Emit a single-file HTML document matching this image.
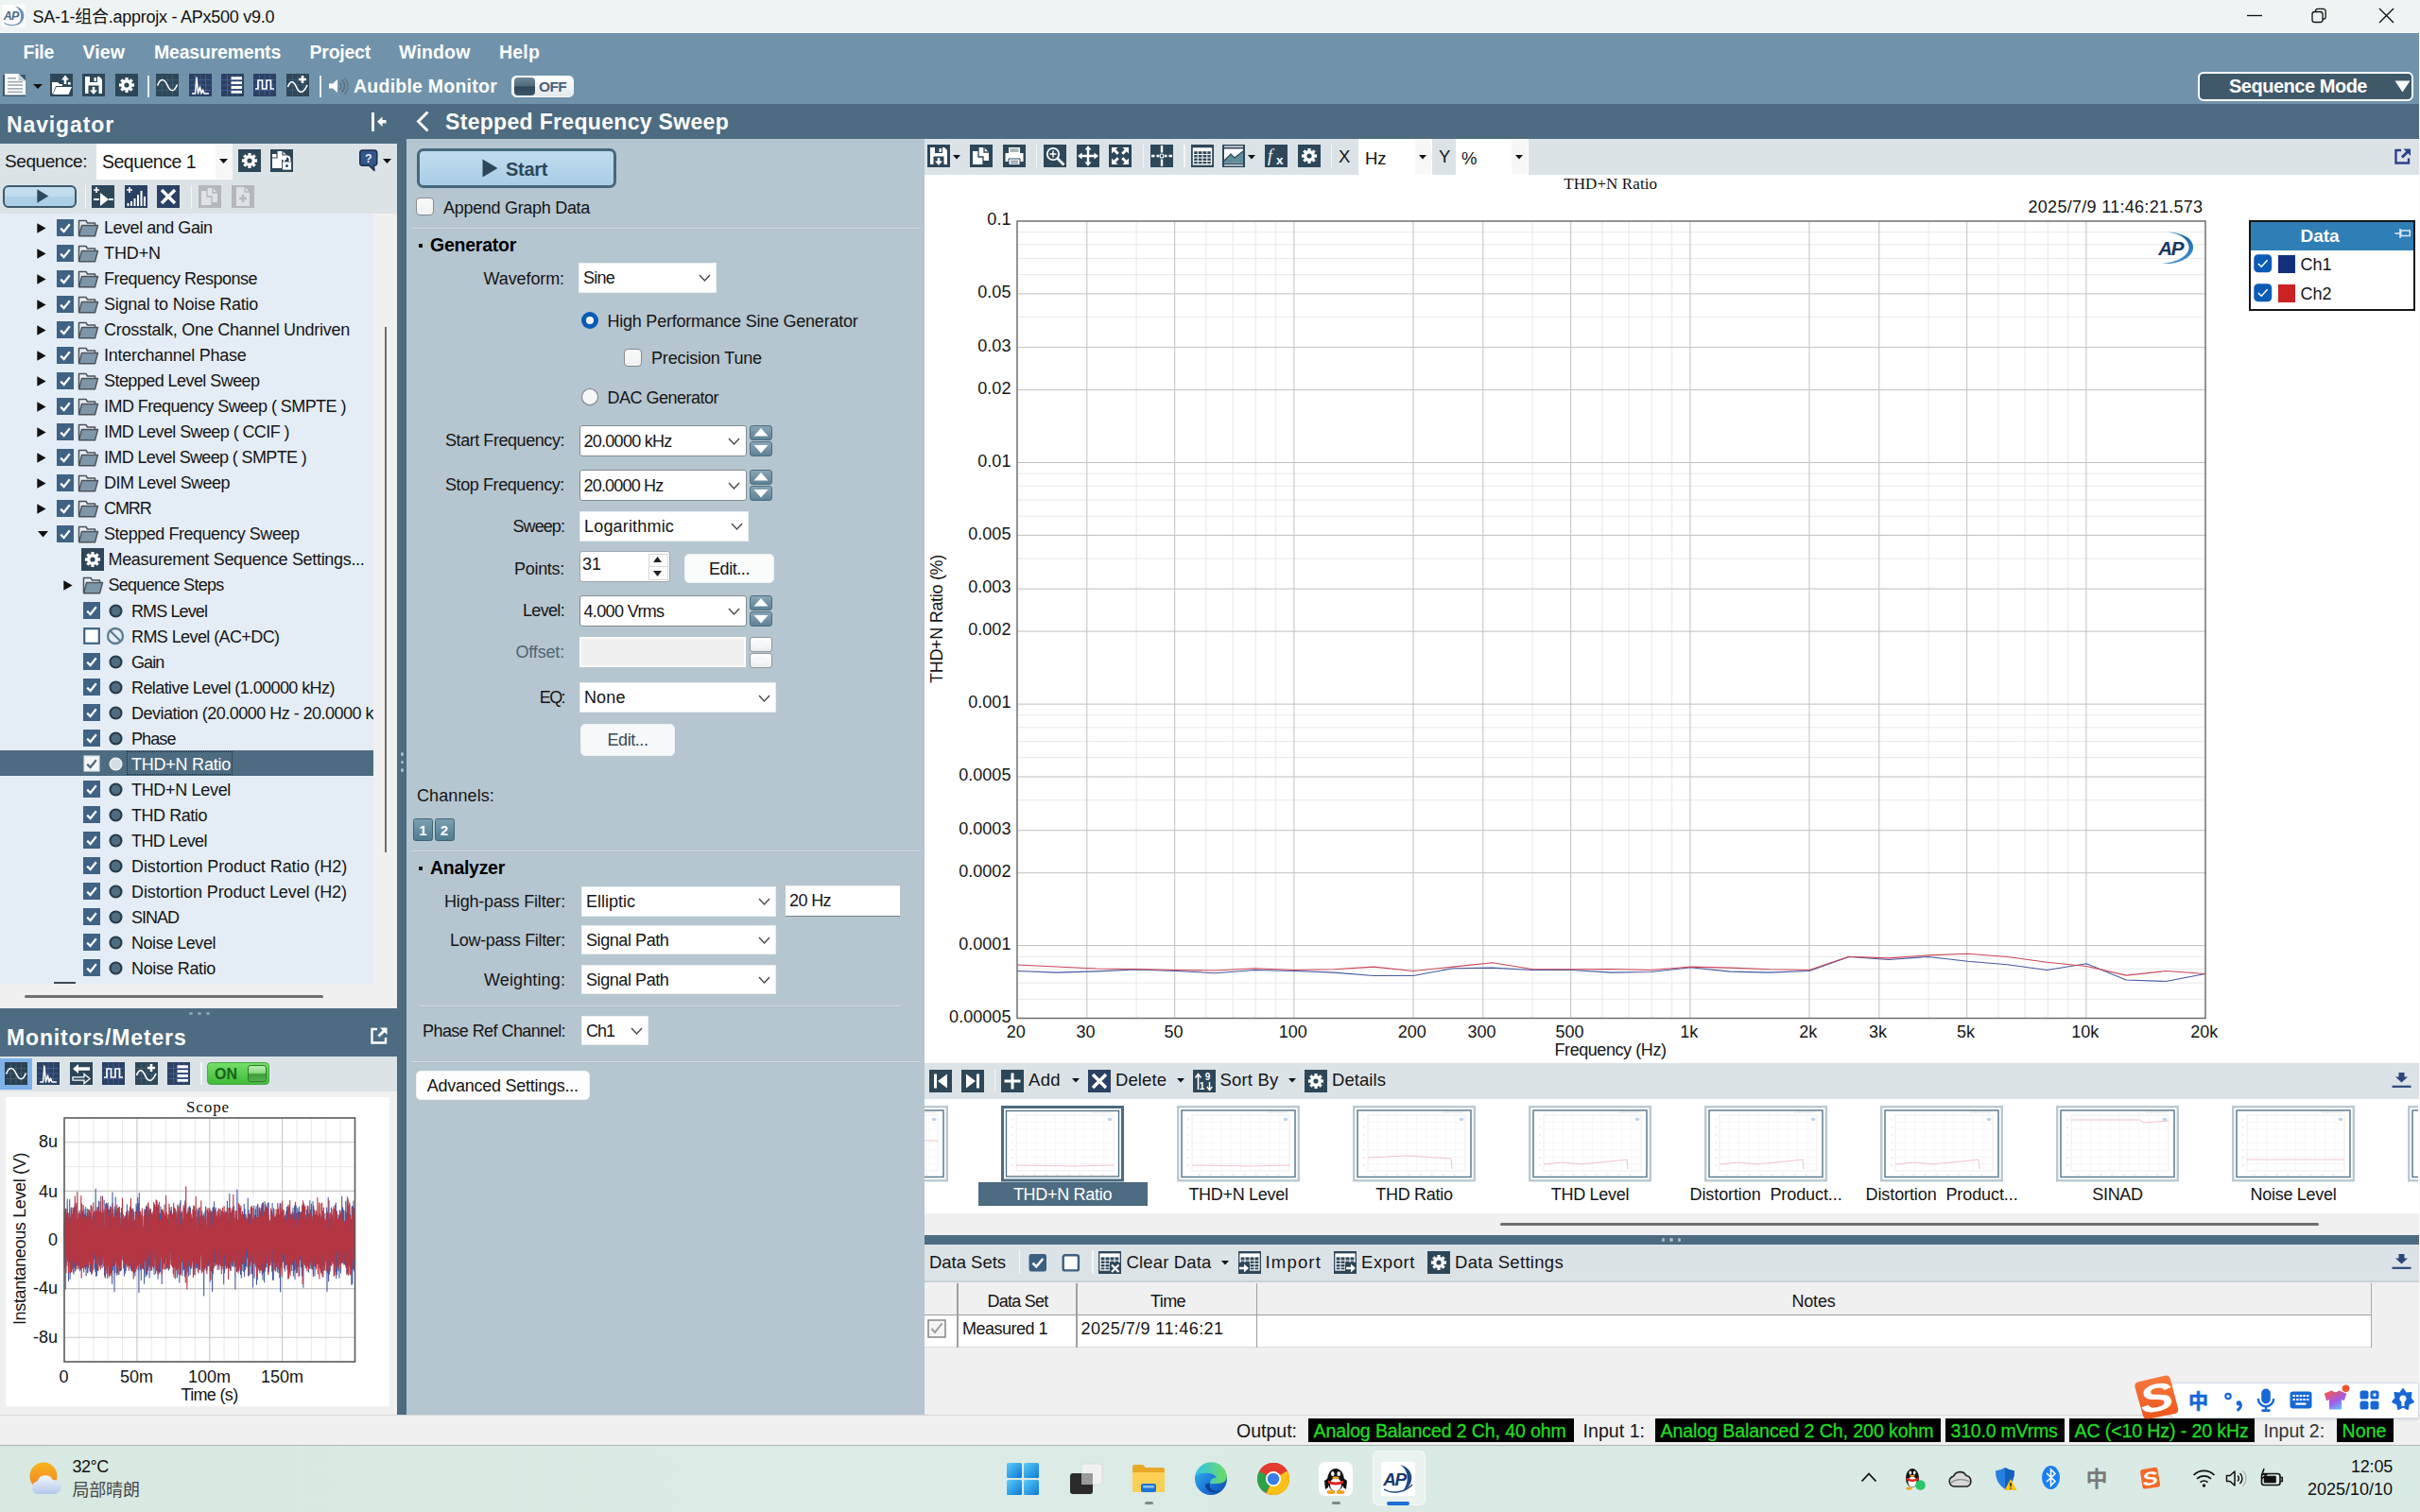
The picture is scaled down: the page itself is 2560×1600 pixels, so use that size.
<!DOCTYPE html>
<html lang="en"><head><meta charset="utf-8"><title>APx500</title>
<style>
html,body{margin:0;padding:0}
body{width:2560px;height:1600px;position:relative;overflow:hidden;background:#fff;font-family:"Liberation Sans","Noto Sans CJK SC",sans-serif;}
div,svg{position:absolute;box-sizing:border-box;}
svg{overflow:visible;display:block}
</style></head>
<body>
<div style="left:0px;top:0px;width:2560px;height:35px;background:#eef4f3;"></div>
<svg style="left:2px;top:5px;" width="24.5" height="23.5" viewBox="0 0 24.5 23.5"><rect x="0" y="0" width="24.5" height="23.5" rx="2" fill="#fdfefe"/><path d="M14 1.5C25 3.5 27.5 17 15.5 22.3C22 16.5 22 6.5 14 1.5Z" fill="#6d8fb0"/><path d="M2.5 19.5C8 23 16 22.5 21 17" stroke="#7d9cba" stroke-width="1.4" fill="none"/><text x="9.6" y="16.2" font-size="12.5" font-weight="bold" font-style="italic" fill="#48688a" text-anchor="middle" font-family="Liberation Sans, sans-serif" letter-spacing="-0.9">AP</text></svg>
<div style="top:6.8px;line-height:23px;height:23px;font-size:18px;color:#111;white-space:pre;left:34.5px;letter-spacing:-0.25px;">SA-1-组合.approjx - APx500 v9.0</div>
<svg style="left:2376px;top:8px;" width="18" height="18" viewBox="0 0 18 18"><path d="M1 8.5H17" stroke="#111" stroke-width="1.3"/></svg>
<svg style="left:2443px;top:6px;" width="20" height="20" viewBox="0 0 20 20"><rect x="3" y="6.5" width="11" height="11" rx="2.5" fill="none" stroke="#111" stroke-width="1.3"/><path d="M6.5 6.5V5.5A2.2 2.2 0 0 1 8.7 3.3H14.5A2.7 2.7 0 0 1 17.2 6V12A2.2 2.2 0 0 1 15 14.2H14" fill="none" stroke="#111" stroke-width="1.3"/></svg>
<svg style="left:2515px;top:7px;" width="19" height="19" viewBox="0 0 19 19"><path d="M2 2L17 17M17 2L2 17" stroke="#111" stroke-width="1.4"/></svg>
<div style="left:0px;top:35px;width:2560px;height:75px;background:#7093ab;"></div>
<div style="top:42.8px;line-height:25px;height:25px;font-size:19.5px;color:#fff;white-space:pre;font-weight:bold;letter-spacing:-0.27px;left:24.5px;">File</div>
<div style="top:42.8px;line-height:25px;height:25px;font-size:19.5px;color:#fff;white-space:pre;font-weight:bold;letter-spacing:0.10px;left:87.5px;">View</div>
<div style="top:42.8px;line-height:25px;height:25px;font-size:19.5px;color:#fff;white-space:pre;font-weight:bold;letter-spacing:-0.21px;left:163px;">Measurements</div>
<div style="top:42.8px;line-height:25px;height:25px;font-size:19.5px;color:#fff;white-space:pre;font-weight:bold;letter-spacing:-0.23px;left:327.5px;">Project</div>
<div style="top:42.8px;line-height:25px;height:25px;font-size:19.5px;color:#fff;white-space:pre;font-weight:bold;letter-spacing:0.16px;left:422px;">Window</div>
<div style="top:42.8px;line-height:25px;height:25px;font-size:19.5px;color:#fff;white-space:pre;font-weight:bold;letter-spacing:0.19px;left:528px;">Help</div>
<svg style="left:3px;top:78.4px;" width="24" height="24" viewBox="0 0 24 24"><rect x="0" y="1" width="24" height="23" fill="#3a566a"/><path d="M2 0H16.5L24 7.5V22.5H2Z" fill="#fff"/><path d="M16.5 0V7.5H24Z" fill="#c3ced6"/><path d="M5 4.8H14M5 8.6H21M5 12.2H21M5 15.8H21M5 19.4H21" stroke="#a5b0b8" stroke-width="1.7"/></svg>
<svg style="left:35px;top:89px;" width="10" height="5" viewBox="0 0 10 5"><path d="M0 0H10L5.0 5Z" fill="#111"/></svg>
<svg style="left:53px;top:78.4px;" width="24" height="24" viewBox="0 0 24 24"><rect width="24" height="24" fill="#2d4759"/><path d="M2 21V9H8L10 11H13V13H6L3 21Z" fill="#fff"/><path d="M6.5 14H23L19.5 22H3Z" fill="#fff"/><path d="M16 1.5L12 6.5H14.7V11H17.3V6.5H20Z" fill="#fff"/><rect x="19" y="9" width="2.6" height="2.6" fill="#fff"/></svg>
<svg style="left:87px;top:78.4px;" width="24" height="24" viewBox="0 0 24 24"><rect width="24" height="24" fill="#2d4759"/><path d="M3 3H18L21 6V21H3Z" fill="#fff"/><rect x="8" y="3" width="8" height="6" fill="#2d4759"/><rect x="12.5" y="4" width="2.4" height="4" fill="#fff"/><rect x="6.5" y="12.5" width="11" height="8.5" fill="#2d4759"/><path d="M12 22L8 17.5H10.7V14H13.3V17.5H16Z" fill="#fff"/></svg>
<svg style="left:122px;top:78.4px;" width="24" height="24" viewBox="0 0 24 24"><rect width="24" height="24" fill="#2d4759"/><path d="M20.03 10.34 L20.03 13.66 L17.83 13.42 L17.13 15.11 L18.85 16.50 L16.50 18.85 L15.11 17.13 L13.42 17.83 L13.66 20.03 L10.34 20.03 L10.58 17.83 L8.89 17.13 L7.50 18.85 L5.15 16.50 L6.87 15.11 L6.17 13.42 L3.97 13.66 L3.97 10.34 L6.17 10.58 L6.87 8.89 L5.15 7.50 L7.50 5.15 L8.89 6.87 L10.58 6.17 L10.34 3.97 L13.66 3.97 L13.42 6.17 L15.11 6.87 L16.50 5.15 L18.85 7.50 L17.13 8.89 L17.83 10.58Z M14.60 12.00 A2.6 2.6 0 1 0 9.40 12.00 A2.6 2.6 0 1 0 14.60 12.00Z" fill="#fff" fill-rule="evenodd"/></svg>
<div style="left:156px;top:80px;width:2px;height:23px;background:#e8eef2;"></div>
<svg style="left:165px;top:78.4px;" width="24" height="24" viewBox="0 0 24 24"><rect width="24" height="24" fill="#2d4759"/><path d="M6.5 1V23M1 6.5H23" stroke="#456073" stroke-width="0.8" fill="none"/><path d="M12 1V23M1 12H23" stroke="#456073" stroke-width="0.8" fill="none"/><path d="M17.5 1V23M1 17.5H23" stroke="#456073" stroke-width="0.8" fill="none"/><path d="M1.5 12.5C4.5 4.5 8.5 4.5 12 12S19 20 22.5 11.5" stroke="#fff" stroke-width="1.6" fill="none"/></svg>
<svg style="left:199.5px;top:78.4px;" width="24" height="24" viewBox="0 0 24 24"><rect width="24" height="24" fill="#2b4163"/><path d="M6.5 1V23M1 6.5H23" stroke="#4c61a3" stroke-width="0.8" fill="none"/><path d="M12 1V23M1 12H23" stroke="#4c61a3" stroke-width="0.8" fill="none"/><path d="M17.5 1V23M1 17.5H23" stroke="#4c61a3" stroke-width="0.8" fill="none"/><path d="M3 21H6.5L8 4L9.5 21L11.5 14L13 21L14.5 17L16 21H21" stroke="#fff" stroke-width="1.5" fill="none" stroke-linejoin="round"/></svg>
<svg style="left:234px;top:78.4px;" width="24" height="24" viewBox="0 0 24 24"><rect width="24" height="24" fill="#2b4163"/><path d="M6.5 1V23M1 6.5H23" stroke="#4c61a3" stroke-width="0.8" fill="none"/><path d="M12 1V23M1 12H23" stroke="#4c61a3" stroke-width="0.8" fill="none"/><path d="M17.5 1V23M1 17.5H23" stroke="#4c61a3" stroke-width="0.8" fill="none"/><path d="M10.5 4.7H22M10.5 9.6H22M10.5 14.5H22M10.5 19.4H22" stroke="#fff" stroke-width="2.9"/></svg>
<svg style="left:268px;top:78.4px;" width="24" height="24" viewBox="0 0 24 24"><rect width="24" height="24" fill="#2b4163"/><path d="M6.5 1V23M1 6.5H23" stroke="#4c61a3" stroke-width="0.8" fill="none"/><path d="M12 1V23M1 12H23" stroke="#4c61a3" stroke-width="0.8" fill="none"/><path d="M17.5 1V23M1 17.5H23" stroke="#4c61a3" stroke-width="0.8" fill="none"/><path d="M2 16H5V7H9.5V16H14V7H18.5V16H22" stroke="#fff" stroke-width="1.7" fill="none"/></svg>
<svg style="left:302.5px;top:78.4px;" width="24" height="24" viewBox="0 0 24 24"><rect width="24" height="24" fill="#2d4759"/><path d="M6.5 1V23M1 6.5H23" stroke="#456073" stroke-width="0.8" fill="none"/><path d="M12 1V23M1 12H23" stroke="#456073" stroke-width="0.8" fill="none"/><path d="M17.5 1V23M1 17.5H23" stroke="#456073" stroke-width="0.8" fill="none"/><path d="M1.5 14C4 7 7.5 7 10.5 14S17.5 22 22 12" stroke="#fff" stroke-width="1.7" fill="none"/><path d="M17 2V10M13 6H21" stroke="#fff" stroke-width="2.6"/></svg>
<div style="left:338px;top:80px;width:2px;height:23px;background:#e8eef2;"></div>
<svg style="left:346px;top:80px;" width="22" height="22" viewBox="0 0 22 22"><path d="M2 8.5H6L11 4V18L6 13.5H2Z" fill="#fff"/><path d="M13.5 7.5A5 5 0 0 1 13.5 14.5" stroke="#5d7283" stroke-width="1.8" fill="none"/><path d="M15.5 4.5A8.5 8.5 0 0 1 15.5 17.5" stroke="#5d7283" stroke-width="1.8" fill="none"/><path d="M18 2A12 12 0 0 1 18 20" stroke="#62798b" stroke-width="1.6" fill="none"/></svg>
<div style="top:79.3px;line-height:25px;height:25px;font-size:19.5px;color:#fff;white-space:pre;font-weight:bold;letter-spacing:0.24px;left:374px;">Audible Monitor</div>
<div style="left:541px;top:79.5px;width:66px;height:23.5px;border-radius:5px;background:linear-gradient(#ffffff,#e3e9ec);border:1px solid #f4f7f8;"></div>
<div style="left:544px;top:82px;width:22px;height:18.5px;border-radius:4px;background:linear-gradient(#6e8799 0%,#4f687a 48%,#2f4759 52%,#3b5567 100%);"></div>
<div style="top:82.3px;line-height:20px;height:20px;font-size:15.5px;color:#4a6276;white-space:pre;font-weight:bold;letter-spacing:-0.66px;left:570px;">OFF</div>
<div style="left:2325px;top:75.5px;width:228px;height:31px;background:#3f596b;border:2.5px solid #fff;border-radius:6px;"></div>
<div style="top:77.8px;line-height:26px;height:26px;font-size:20px;color:#fff;white-space:pre;font-weight:bold;letter-spacing:-0.48px;left:2358px;">Sequence Mode</div>
<svg style="left:2533px;top:85px;" width="17" height="13" viewBox="0 0 17 13"><path d="M0.5 0.5H16.5L8.5 12.5Z" fill="#fff"/></svg>
<div style="left:0px;top:110px;width:2560px;height:37px;background:#4d6b81;"></div>
<div style="left:0px;top:110px;width:420px;height:42px;background:#4d6b81;"></div>
<div style="top:116.8px;line-height:30px;height:30px;font-size:23px;color:#fff;white-space:pre;font-weight:bold;letter-spacing:0.88px;left:7px;">Navigator</div>
<svg style="left:391px;top:118px;" width="20" height="22" viewBox="0 0 20 22"><path d="M3.5 1V21" stroke="#fff" stroke-width="3"/><path d="M17.5 10.7H11" stroke="#fff" stroke-width="3.4"/><path d="M8 10.7L13.5 5.5V15.9Z" fill="#fff"/></svg>
<svg style="left:440px;top:117px;" width="15" height="23" viewBox="0 0 15 23"><path d="M12.5 1.5L2.5 11.5L12.5 21.5" stroke="#fff" stroke-width="2.9" fill="none"/></svg>
<div style="top:114.3px;line-height:30px;height:30px;font-size:23px;color:#fff;white-space:pre;font-weight:bold;letter-spacing:0.32px;left:471px;">Stepped Frequency Sweep</div>
<div style="left:0px;top:152px;width:420px;height:74px;background:#dbe3e7;"></div>
<div style="top:158.3px;line-height:25px;height:25px;font-size:19px;color:#151515;white-space:pre;letter-spacing:-0.43px;left:5px;">Sequence:</div>
<div style="left:102px;top:152px;width:144px;height:37.5px;background:#fff;"></div>
<div style="left:228px;top:153px;width:18px;height:35.5px;background:#f7f7f7;"></div>
<div style="top:159.3px;line-height:25px;height:25px;font-size:19.5px;color:#151515;white-space:pre;letter-spacing:-0.51px;left:108px;">Sequence 1</div>
<svg style="left:231.5px;top:168px;" width="9" height="5" viewBox="0 0 9 5"><path d="M0 0H9L4.5 5Z" fill="#111"/></svg>
<svg style="left:252px;top:158px;" width="24" height="24" viewBox="0 0 24 24"><rect width="24" height="24" fill="#2d4759"/><path d="M20.03 10.34 L20.03 13.66 L17.83 13.42 L17.13 15.11 L18.85 16.50 L16.50 18.85 L15.11 17.13 L13.42 17.83 L13.66 20.03 L10.34 20.03 L10.58 17.83 L8.89 17.13 L7.50 18.85 L5.15 16.50 L6.87 15.11 L6.17 13.42 L3.97 13.66 L3.97 10.34 L6.17 10.58 L6.87 8.89 L5.15 7.50 L7.50 5.15 L8.89 6.87 L10.58 6.17 L10.34 3.97 L13.66 3.97 L13.42 6.17 L15.11 6.87 L16.50 5.15 L18.85 7.50 L17.13 8.89 L17.83 10.58Z M14.60 12.00 A2.6 2.6 0 1 0 9.40 12.00 A2.6 2.6 0 1 0 14.60 12.00Z" fill="#fff" fill-rule="evenodd"/></svg>
<svg style="left:286px;top:158px;" width="24" height="24" viewBox="0 0 24 24"><rect width="24" height="24" fill="#2d4759"/><path d="M2 5H7V2H13L17 6V11H12V20H2Z" fill="#fff"/><path d="M7 2V9H2M13 2V6H17" stroke="#2d4759" stroke-width="1.2" fill="none"/><rect x="12.5" y="13" width="10" height="9" fill="#fff" stroke="#2d4759" stroke-width="0.8"/><path d="M14.5 13V10.5A3 3 0 0 1 20.5 10.5V13" stroke="#fff" stroke-width="1.8" fill="none"/><circle cx="17.5" cy="17.5" r="1.5" fill="#2d4759"/></svg>
<svg style="left:379.5px;top:157.5px;" width="21" height="24.5" viewBox="0 0 21 24.5"><path d="M3.5 1H16A2.8 2.8 0 0 1 18.8 3.8V14.5A2.8 2.8 0 0 1 16 17.3H15.3L16 22.5L10.5 17.3H3.5A2.8 2.8 0 0 1 0.8 14.5V3.8A2.8 2.8 0 0 1 3.5 1Z" fill="#33568b" stroke="#1c2d4d" stroke-width="1.5" stroke-linejoin="round"/><text x="9.8" y="13.8" font-size="12.5" font-weight="bold" fill="#e8eef6" text-anchor="middle" font-family="Liberation Sans, sans-serif">?</text></svg>
<svg style="left:404.5px;top:168px;" width="9" height="5" viewBox="0 0 9 5"><path d="M0 0H9L4.5 5Z" fill="#111"/></svg>
<div style="left:3px;top:195.6px;width:78px;height:24px;border-radius:6px;border:2.5px solid #3f5a6b;background:linear-gradient(#c3deef 0%,#bfdbed 48%,#acd0e6 52%,#aacfe6 100%);"></div>
<svg style="left:39px;top:200.2px;" width="13" height="15" viewBox="0 0 13 15"><path d="M0.3 0.3L12.3 7.5L0.3 14.7Z" fill="#2f4a5c"/></svg>
<div style="left:89.5px;top:196px;width:1.5px;height:25px;background:#f6f8f9;"></div>
<svg style="left:97.3px;top:195.7px;" width="24" height="24" viewBox="0 0 24 24"><rect width="24" height="24" fill="#2d4759"/><path d="M5 2V8M2 5H8" stroke="#fff" stroke-width="1.6"/><path d="M2 15H8M18 15H23" stroke="#fff" stroke-width="2"/><path d="M9 8L18 15L9 22Z" fill="#fff"/></svg>
<svg style="left:132px;top:195.7px;" width="24" height="24" viewBox="0 0 24 24"><rect width="24" height="24" fill="#2b4163"/><path d="M5 2V8M2 5H8" stroke="#fff" stroke-width="1.6"/><path d="M3.5 22V19M7 22V17M10.5 22V14M14 22V10M17.5 22V6M21 22V12" stroke="#fff" stroke-width="2"/></svg>
<svg style="left:166px;top:195.7px;" width="24" height="24" viewBox="0 0 24 24"><rect width="24" height="24" fill="#2b4163"/><path d="M5 5L19 19M19 5L5 19" stroke="#fff" stroke-width="3.4"/></svg>
<div style="left:201.5px;top:196px;width:1.5px;height:25px;background:#f6f8f9;"></div>
<svg style="left:210px;top:195.7px;" width="24" height="24" viewBox="0 0 24 24"><rect width="24" height="24" fill="#b4b8bb"/><path d="M3 6H9L9 3H15L20 8V18H14V21H3Z" fill="#dfe3e5"/><path d="M9 3V12H14V21M15 3V8H20" stroke="#b4b8bb" stroke-width="1.3" fill="none"/></svg>
<svg style="left:244.5px;top:195.7px;" width="24" height="24" viewBox="0 0 24 24"><rect width="24" height="24" fill="#b4b8bb"/><path d="M5 2H14L19 7V22H5Z" fill="#dfe3e5"/><path d="M14 2V7H19" stroke="#b4b8bb" stroke-width="1.3" fill="none"/><path d="M12 10V18M8 14H16" stroke="#b4b8bb" stroke-width="2.4"/></svg>
<div style="left:0px;top:226px;width:395px;height:815px;background:#e4edf6;"></div>
<div style="left:395px;top:226px;width:25px;height:841px;background:#f0f0f0;"></div>
<div style="left:0px;top:1041px;width:395px;height:26px;background:#f0f0f0;"></div>
<div style="left:26px;top:1053px;width:316px;height:3px;background:#6e6e6e;border-radius:2px;"></div>
<svg style="left:39px;top:235.5px;" width="10" height="11" viewBox="0 0 10 11"><path d="M0.3 0.3L9.6 5.5L0.3 10.7Z" fill="#111"/></svg>
<svg style="left:60px;top:232px;" width="18" height="18" viewBox="0 0 18 18"><rect width="18" height="18" fill="#3f6285"/><path d="M4.2 9.6L7.6 13L13.8 5.2" stroke="#fff" stroke-width="2.2" fill="none"/></svg>
<svg style="left:82px;top:230.5px;" width="23" height="21" viewBox="0 0 23 21"><path d="M1.5 18.5V2.5H9L10.5 5H18.5V8" fill="#e9eff4" stroke="#4a5258" stroke-width="1.5" stroke-linejoin="round"/><path d="M4.5 7.5H21.5L18.5 18.8H1.6Z" fill="#7e97a8" stroke="#4a5258" stroke-width="1.4" stroke-linejoin="round"/></svg>
<div style="top:230.1px;line-height:23px;height:23px;font-size:18px;color:#151515;white-space:pre;letter-spacing:-0.47px;left:110px;">Level and Gain</div>
<svg style="left:39px;top:262.5px;" width="10" height="11" viewBox="0 0 10 11"><path d="M0.3 0.3L9.6 5.5L0.3 10.7Z" fill="#111"/></svg>
<svg style="left:60px;top:259px;" width="18" height="18" viewBox="0 0 18 18"><rect width="18" height="18" fill="#3f6285"/><path d="M4.2 9.6L7.6 13L13.8 5.2" stroke="#fff" stroke-width="2.2" fill="none"/></svg>
<svg style="left:82px;top:257.5px;" width="23" height="21" viewBox="0 0 23 21"><path d="M1.5 18.5V2.5H9L10.5 5H18.5V8" fill="#e9eff4" stroke="#4a5258" stroke-width="1.5" stroke-linejoin="round"/><path d="M4.5 7.5H21.5L18.5 18.8H1.6Z" fill="#7e97a8" stroke="#4a5258" stroke-width="1.4" stroke-linejoin="round"/></svg>
<div style="top:257.1px;line-height:23px;height:23px;font-size:18px;color:#151515;white-space:pre;letter-spacing:-0.10px;left:110px;">THD+N</div>
<svg style="left:39px;top:289.5px;" width="10" height="11" viewBox="0 0 10 11"><path d="M0.3 0.3L9.6 5.5L0.3 10.7Z" fill="#111"/></svg>
<svg style="left:60px;top:286px;" width="18" height="18" viewBox="0 0 18 18"><rect width="18" height="18" fill="#3f6285"/><path d="M4.2 9.6L7.6 13L13.8 5.2" stroke="#fff" stroke-width="2.2" fill="none"/></svg>
<svg style="left:82px;top:284.5px;" width="23" height="21" viewBox="0 0 23 21"><path d="M1.5 18.5V2.5H9L10.5 5H18.5V8" fill="#e9eff4" stroke="#4a5258" stroke-width="1.5" stroke-linejoin="round"/><path d="M4.5 7.5H21.5L18.5 18.8H1.6Z" fill="#7e97a8" stroke="#4a5258" stroke-width="1.4" stroke-linejoin="round"/></svg>
<div style="top:284.1px;line-height:23px;height:23px;font-size:18px;color:#151515;white-space:pre;letter-spacing:-0.51px;left:110px;">Frequency Response</div>
<svg style="left:39px;top:316.5px;" width="10" height="11" viewBox="0 0 10 11"><path d="M0.3 0.3L9.6 5.5L0.3 10.7Z" fill="#111"/></svg>
<svg style="left:60px;top:313px;" width="18" height="18" viewBox="0 0 18 18"><rect width="18" height="18" fill="#3f6285"/><path d="M4.2 9.6L7.6 13L13.8 5.2" stroke="#fff" stroke-width="2.2" fill="none"/></svg>
<svg style="left:82px;top:311.5px;" width="23" height="21" viewBox="0 0 23 21"><path d="M1.5 18.5V2.5H9L10.5 5H18.5V8" fill="#e9eff4" stroke="#4a5258" stroke-width="1.5" stroke-linejoin="round"/><path d="M4.5 7.5H21.5L18.5 18.8H1.6Z" fill="#7e97a8" stroke="#4a5258" stroke-width="1.4" stroke-linejoin="round"/></svg>
<div style="top:311.1px;line-height:23px;height:23px;font-size:18px;color:#151515;white-space:pre;letter-spacing:-0.24px;left:110px;">Signal to Noise Ratio</div>
<svg style="left:39px;top:343.5px;" width="10" height="11" viewBox="0 0 10 11"><path d="M0.3 0.3L9.6 5.5L0.3 10.7Z" fill="#111"/></svg>
<svg style="left:60px;top:340px;" width="18" height="18" viewBox="0 0 18 18"><rect width="18" height="18" fill="#3f6285"/><path d="M4.2 9.6L7.6 13L13.8 5.2" stroke="#fff" stroke-width="2.2" fill="none"/></svg>
<svg style="left:82px;top:338.5px;" width="23" height="21" viewBox="0 0 23 21"><path d="M1.5 18.5V2.5H9L10.5 5H18.5V8" fill="#e9eff4" stroke="#4a5258" stroke-width="1.5" stroke-linejoin="round"/><path d="M4.5 7.5H21.5L18.5 18.8H1.6Z" fill="#7e97a8" stroke="#4a5258" stroke-width="1.4" stroke-linejoin="round"/></svg>
<div style="top:338.1px;line-height:23px;height:23px;font-size:18px;color:#151515;white-space:pre;letter-spacing:-0.26px;left:110px;">Crosstalk, One Channel Undriven</div>
<svg style="left:39px;top:370.5px;" width="10" height="11" viewBox="0 0 10 11"><path d="M0.3 0.3L9.6 5.5L0.3 10.7Z" fill="#111"/></svg>
<svg style="left:60px;top:367px;" width="18" height="18" viewBox="0 0 18 18"><rect width="18" height="18" fill="#3f6285"/><path d="M4.2 9.6L7.6 13L13.8 5.2" stroke="#fff" stroke-width="2.2" fill="none"/></svg>
<svg style="left:82px;top:365.5px;" width="23" height="21" viewBox="0 0 23 21"><path d="M1.5 18.5V2.5H9L10.5 5H18.5V8" fill="#e9eff4" stroke="#4a5258" stroke-width="1.5" stroke-linejoin="round"/><path d="M4.5 7.5H21.5L18.5 18.8H1.6Z" fill="#7e97a8" stroke="#4a5258" stroke-width="1.4" stroke-linejoin="round"/></svg>
<div style="top:365.1px;line-height:23px;height:23px;font-size:18px;color:#151515;white-space:pre;letter-spacing:-0.26px;left:110px;">Interchannel Phase</div>
<svg style="left:39px;top:397.5px;" width="10" height="11" viewBox="0 0 10 11"><path d="M0.3 0.3L9.6 5.5L0.3 10.7Z" fill="#111"/></svg>
<svg style="left:60px;top:394px;" width="18" height="18" viewBox="0 0 18 18"><rect width="18" height="18" fill="#3f6285"/><path d="M4.2 9.6L7.6 13L13.8 5.2" stroke="#fff" stroke-width="2.2" fill="none"/></svg>
<svg style="left:82px;top:392.5px;" width="23" height="21" viewBox="0 0 23 21"><path d="M1.5 18.5V2.5H9L10.5 5H18.5V8" fill="#e9eff4" stroke="#4a5258" stroke-width="1.5" stroke-linejoin="round"/><path d="M4.5 7.5H21.5L18.5 18.8H1.6Z" fill="#7e97a8" stroke="#4a5258" stroke-width="1.4" stroke-linejoin="round"/></svg>
<div style="top:392.1px;line-height:23px;height:23px;font-size:18px;color:#151515;white-space:pre;letter-spacing:-0.56px;left:110px;">Stepped Level Sweep</div>
<svg style="left:39px;top:424.5px;" width="10" height="11" viewBox="0 0 10 11"><path d="M0.3 0.3L9.6 5.5L0.3 10.7Z" fill="#111"/></svg>
<svg style="left:60px;top:421px;" width="18" height="18" viewBox="0 0 18 18"><rect width="18" height="18" fill="#3f6285"/><path d="M4.2 9.6L7.6 13L13.8 5.2" stroke="#fff" stroke-width="2.2" fill="none"/></svg>
<svg style="left:82px;top:419.5px;" width="23" height="21" viewBox="0 0 23 21"><path d="M1.5 18.5V2.5H9L10.5 5H18.5V8" fill="#e9eff4" stroke="#4a5258" stroke-width="1.5" stroke-linejoin="round"/><path d="M4.5 7.5H21.5L18.5 18.8H1.6Z" fill="#7e97a8" stroke="#4a5258" stroke-width="1.4" stroke-linejoin="round"/></svg>
<div style="top:419.1px;line-height:23px;height:23px;font-size:18px;color:#151515;white-space:pre;letter-spacing:-0.56px;left:110px;">IMD Frequency Sweep ( SMPTE )</div>
<svg style="left:39px;top:451.5px;" width="10" height="11" viewBox="0 0 10 11"><path d="M0.3 0.3L9.6 5.5L0.3 10.7Z" fill="#111"/></svg>
<svg style="left:60px;top:448px;" width="18" height="18" viewBox="0 0 18 18"><rect width="18" height="18" fill="#3f6285"/><path d="M4.2 9.6L7.6 13L13.8 5.2" stroke="#fff" stroke-width="2.2" fill="none"/></svg>
<svg style="left:82px;top:446.5px;" width="23" height="21" viewBox="0 0 23 21"><path d="M1.5 18.5V2.5H9L10.5 5H18.5V8" fill="#e9eff4" stroke="#4a5258" stroke-width="1.5" stroke-linejoin="round"/><path d="M4.5 7.5H21.5L18.5 18.8H1.6Z" fill="#7e97a8" stroke="#4a5258" stroke-width="1.4" stroke-linejoin="round"/></svg>
<div style="top:446.1px;line-height:23px;height:23px;font-size:18px;color:#151515;white-space:pre;letter-spacing:-0.59px;left:110px;">IMD Level Sweep ( CCIF )</div>
<svg style="left:39px;top:478.5px;" width="10" height="11" viewBox="0 0 10 11"><path d="M0.3 0.3L9.6 5.5L0.3 10.7Z" fill="#111"/></svg>
<svg style="left:60px;top:475px;" width="18" height="18" viewBox="0 0 18 18"><rect width="18" height="18" fill="#3f6285"/><path d="M4.2 9.6L7.6 13L13.8 5.2" stroke="#fff" stroke-width="2.2" fill="none"/></svg>
<svg style="left:82px;top:473.5px;" width="23" height="21" viewBox="0 0 23 21"><path d="M1.5 18.5V2.5H9L10.5 5H18.5V8" fill="#e9eff4" stroke="#4a5258" stroke-width="1.5" stroke-linejoin="round"/><path d="M4.5 7.5H21.5L18.5 18.8H1.6Z" fill="#7e97a8" stroke="#4a5258" stroke-width="1.4" stroke-linejoin="round"/></svg>
<div style="top:473.1px;line-height:23px;height:23px;font-size:18px;color:#151515;white-space:pre;letter-spacing:-0.64px;left:110px;">IMD Level Sweep ( SMPTE )</div>
<svg style="left:39px;top:505.5px;" width="10" height="11" viewBox="0 0 10 11"><path d="M0.3 0.3L9.6 5.5L0.3 10.7Z" fill="#111"/></svg>
<svg style="left:60px;top:502px;" width="18" height="18" viewBox="0 0 18 18"><rect width="18" height="18" fill="#3f6285"/><path d="M4.2 9.6L7.6 13L13.8 5.2" stroke="#fff" stroke-width="2.2" fill="none"/></svg>
<svg style="left:82px;top:500.5px;" width="23" height="21" viewBox="0 0 23 21"><path d="M1.5 18.5V2.5H9L10.5 5H18.5V8" fill="#e9eff4" stroke="#4a5258" stroke-width="1.5" stroke-linejoin="round"/><path d="M4.5 7.5H21.5L18.5 18.8H1.6Z" fill="#7e97a8" stroke="#4a5258" stroke-width="1.4" stroke-linejoin="round"/></svg>
<div style="top:500.1px;line-height:23px;height:23px;font-size:18px;color:#151515;white-space:pre;letter-spacing:-0.54px;left:110px;">DIM Level Sweep</div>
<svg style="left:39px;top:532.5px;" width="10" height="11" viewBox="0 0 10 11"><path d="M0.3 0.3L9.6 5.5L0.3 10.7Z" fill="#111"/></svg>
<svg style="left:60px;top:529px;" width="18" height="18" viewBox="0 0 18 18"><rect width="18" height="18" fill="#3f6285"/><path d="M4.2 9.6L7.6 13L13.8 5.2" stroke="#fff" stroke-width="2.2" fill="none"/></svg>
<svg style="left:82px;top:527.5px;" width="23" height="21" viewBox="0 0 23 21"><path d="M1.5 18.5V2.5H9L10.5 5H18.5V8" fill="#e9eff4" stroke="#4a5258" stroke-width="1.5" stroke-linejoin="round"/><path d="M4.5 7.5H21.5L18.5 18.8H1.6Z" fill="#7e97a8" stroke="#4a5258" stroke-width="1.4" stroke-linejoin="round"/></svg>
<div style="top:527.1px;line-height:23px;height:23px;font-size:18px;color:#151515;white-space:pre;letter-spacing:-1.12px;left:110px;">CMRR</div>
<svg style="left:39.5px;top:562px;" width="11" height="7" viewBox="0 0 11 7"><path d="M0 0H11L5.5 6.5Z" fill="#111"/></svg>
<svg style="left:60px;top:556px;" width="18" height="18" viewBox="0 0 18 18"><rect width="18" height="18" fill="#3f6285"/><path d="M4.2 9.6L7.6 13L13.8 5.2" stroke="#fff" stroke-width="2.2" fill="none"/></svg>
<svg style="left:82px;top:554.5px;" width="23" height="21" viewBox="0 0 23 21"><path d="M1.5 18.5V2.5H9L10.5 5H18.5V8" fill="#e9eff4" stroke="#4a5258" stroke-width="1.5" stroke-linejoin="round"/><path d="M4.5 7.5H21.5L18.5 18.8H1.6Z" fill="#7e97a8" stroke="#4a5258" stroke-width="1.4" stroke-linejoin="round"/></svg>
<div style="top:554.1px;line-height:23px;height:23px;font-size:18px;color:#151515;white-space:pre;letter-spacing:-0.46px;left:110px;">Stepped Frequency Sweep</div>
<svg style="left:85.5px;top:580px;" width="24" height="24" viewBox="0 0 24 24"><rect width="24" height="24" fill="#2d4759"/><path d="M20.03 10.34 L20.03 13.66 L17.83 13.42 L17.13 15.11 L18.85 16.50 L16.50 18.85 L15.11 17.13 L13.42 17.83 L13.66 20.03 L10.34 20.03 L10.58 17.83 L8.89 17.13 L7.50 18.85 L5.15 16.50 L6.87 15.11 L6.17 13.42 L3.97 13.66 L3.97 10.34 L6.17 10.58 L6.87 8.89 L5.15 7.50 L7.50 5.15 L8.89 6.87 L10.58 6.17 L10.34 3.97 L13.66 3.97 L13.42 6.17 L15.11 6.87 L16.50 5.15 L18.85 7.50 L17.13 8.89 L17.83 10.58Z M14.60 12.00 A2.6 2.6 0 1 0 9.40 12.00 A2.6 2.6 0 1 0 14.60 12.00Z" fill="#fff" fill-rule="evenodd"/></svg>
<div style="top:581.1px;line-height:23px;height:23px;font-size:18px;color:#151515;white-space:pre;letter-spacing:-0.32px;left:114.5px;">Measurement Sequence Settings...</div>
<svg style="left:67px;top:613.5px;" width="10" height="11" viewBox="0 0 10 11"><path d="M0.3 0.3L9.6 5.5L0.3 10.7Z" fill="#111"/></svg>
<svg style="left:87px;top:608.5px;" width="23" height="21" viewBox="0 0 23 21"><path d="M1.5 18.5V2.5H9L10.5 5H18.5V8" fill="#e9eff4" stroke="#4a5258" stroke-width="1.5" stroke-linejoin="round"/><path d="M4.5 7.5H21.5L18.5 18.8H1.6Z" fill="#7e97a8" stroke="#4a5258" stroke-width="1.4" stroke-linejoin="round"/></svg>
<div style="top:608.1px;line-height:23px;height:23px;font-size:18px;color:#151515;white-space:pre;letter-spacing:-0.72px;left:114.5px;">Sequence Steps</div>
<svg style="left:88px;top:637px;" width="18" height="18" viewBox="0 0 18 18"><rect width="18" height="18" fill="#3f6285"/><path d="M4.2 9.6L7.6 13L13.8 5.2" stroke="#fff" stroke-width="2.2" fill="none"/></svg>
<svg style="left:114.5px;top:638.5px;" width="15" height="15" viewBox="0 0 15 15"><circle cx="7.5" cy="7.5" r="6" fill="#4f6c80" stroke="#273b48" stroke-width="2.1"/></svg>
<div style="top:635.6px;line-height:23px;height:23px;font-size:18px;color:#151515;white-space:pre;letter-spacing:-0.89px;left:139px;">RMS Level</div>
<svg style="left:88px;top:664px;" width="18" height="18" viewBox="0 0 18 18"><rect x="1.2" y="1.2" width="15.6" height="15.6" fill="#fff" stroke="#3f6285" stroke-width="2.2"/></svg>
<svg style="left:112px;top:663px;" width="20" height="20" viewBox="0 0 20 20"><circle cx="10" cy="10" r="8" fill="none" stroke="#5c7d8e" stroke-width="2.3"/><path d="M4.5 4.5L15.5 15.5" stroke="#5c7d8e" stroke-width="2.3"/></svg>
<div style="top:662.6px;line-height:23px;height:23px;font-size:18px;color:#151515;white-space:pre;letter-spacing:-0.59px;left:139px;">RMS Level (AC+DC)</div>
<svg style="left:88px;top:691px;" width="18" height="18" viewBox="0 0 18 18"><rect width="18" height="18" fill="#3f6285"/><path d="M4.2 9.6L7.6 13L13.8 5.2" stroke="#fff" stroke-width="2.2" fill="none"/></svg>
<svg style="left:114.5px;top:692.5px;" width="15" height="15" viewBox="0 0 15 15"><circle cx="7.5" cy="7.5" r="6" fill="#4f6c80" stroke="#273b48" stroke-width="2.1"/></svg>
<div style="top:689.6px;line-height:23px;height:23px;font-size:18px;color:#151515;white-space:pre;letter-spacing:-0.88px;left:139px;">Gain</div>
<svg style="left:88px;top:718px;" width="18" height="18" viewBox="0 0 18 18"><rect width="18" height="18" fill="#3f6285"/><path d="M4.2 9.6L7.6 13L13.8 5.2" stroke="#fff" stroke-width="2.2" fill="none"/></svg>
<svg style="left:114.5px;top:719.5px;" width="15" height="15" viewBox="0 0 15 15"><circle cx="7.5" cy="7.5" r="6" fill="#4f6c80" stroke="#273b48" stroke-width="2.1"/></svg>
<div style="top:716.6px;line-height:23px;height:23px;font-size:18px;color:#151515;white-space:pre;letter-spacing:-0.58px;left:139px;">Relative Level (1.00000 kHz)</div>
<svg style="left:88px;top:745px;" width="18" height="18" viewBox="0 0 18 18"><rect width="18" height="18" fill="#3f6285"/><path d="M4.2 9.6L7.6 13L13.8 5.2" stroke="#fff" stroke-width="2.2" fill="none"/></svg>
<svg style="left:114.5px;top:746.5px;" width="15" height="15" viewBox="0 0 15 15"><circle cx="7.5" cy="7.5" r="6" fill="#4f6c80" stroke="#273b48" stroke-width="2.1"/></svg>
<div style="top:743.6px;line-height:23px;height:23px;font-size:18px;color:#151515;white-space:pre;letter-spacing:-0.52px;left:139px;">Deviation (20.0000 Hz - 20.0000 k</div>
<svg style="left:88px;top:772px;" width="18" height="18" viewBox="0 0 18 18"><rect width="18" height="18" fill="#3f6285"/><path d="M4.2 9.6L7.6 13L13.8 5.2" stroke="#fff" stroke-width="2.2" fill="none"/></svg>
<svg style="left:114.5px;top:773.5px;" width="15" height="15" viewBox="0 0 15 15"><circle cx="7.5" cy="7.5" r="6" fill="#4f6c80" stroke="#273b48" stroke-width="2.1"/></svg>
<div style="top:770.6px;line-height:23px;height:23px;font-size:18px;color:#151515;white-space:pre;letter-spacing:-0.91px;left:139px;">Phase</div>
<div style="left:0px;top:794px;width:395px;height:26.5px;background:#4d6b81;"></div>
<div style="left:134px;top:794.5px;width:112px;height:25.5px;border:1px dotted #1b2b36;"></div>
<svg style="left:88px;top:799px;" width="18" height="18" viewBox="0 0 18 18"><rect x="1" y="1" width="16" height="16" fill="#f4f6f8" stroke="#d8dee3" stroke-width="1.2"/><path d="M4.2 9.6L7.6 13L13.8 5.2" stroke="#4d6b81" stroke-width="2.2" fill="none"/></svg>
<svg style="left:114.5px;top:800.5px;" width="15" height="15" viewBox="0 0 15 15"><circle cx="7.5" cy="7.5" r="6.3" fill="#d5dde2" stroke="#eef2f4" stroke-width="1.4"/></svg>
<div style="top:797.6px;line-height:23px;height:23px;font-size:18px;color:#fff;white-space:pre;letter-spacing:-0.23px;left:139px;">THD+N Ratio</div>
<svg style="left:88px;top:826px;" width="18" height="18" viewBox="0 0 18 18"><rect width="18" height="18" fill="#3f6285"/><path d="M4.2 9.6L7.6 13L13.8 5.2" stroke="#fff" stroke-width="2.2" fill="none"/></svg>
<svg style="left:114.5px;top:827.5px;" width="15" height="15" viewBox="0 0 15 15"><circle cx="7.5" cy="7.5" r="6" fill="#4f6c80" stroke="#273b48" stroke-width="2.1"/></svg>
<div style="top:824.6px;line-height:23px;height:23px;font-size:18px;color:#151515;white-space:pre;letter-spacing:-0.32px;left:139px;">THD+N Level</div>
<svg style="left:88px;top:853px;" width="18" height="18" viewBox="0 0 18 18"><rect width="18" height="18" fill="#3f6285"/><path d="M4.2 9.6L7.6 13L13.8 5.2" stroke="#fff" stroke-width="2.2" fill="none"/></svg>
<svg style="left:114.5px;top:854.5px;" width="15" height="15" viewBox="0 0 15 15"><circle cx="7.5" cy="7.5" r="6" fill="#4f6c80" stroke="#273b48" stroke-width="2.1"/></svg>
<div style="top:851.6px;line-height:23px;height:23px;font-size:18px;color:#151515;white-space:pre;letter-spacing:-0.45px;left:139px;">THD Ratio</div>
<svg style="left:88px;top:880px;" width="18" height="18" viewBox="0 0 18 18"><rect width="18" height="18" fill="#3f6285"/><path d="M4.2 9.6L7.6 13L13.8 5.2" stroke="#fff" stroke-width="2.2" fill="none"/></svg>
<svg style="left:114.5px;top:881.5px;" width="15" height="15" viewBox="0 0 15 15"><circle cx="7.5" cy="7.5" r="6" fill="#4f6c80" stroke="#273b48" stroke-width="2.1"/></svg>
<div style="top:878.6px;line-height:23px;height:23px;font-size:18px;color:#151515;white-space:pre;letter-spacing:-0.56px;left:139px;">THD Level</div>
<svg style="left:88px;top:907px;" width="18" height="18" viewBox="0 0 18 18"><rect width="18" height="18" fill="#3f6285"/><path d="M4.2 9.6L7.6 13L13.8 5.2" stroke="#fff" stroke-width="2.2" fill="none"/></svg>
<svg style="left:114.5px;top:908.5px;" width="15" height="15" viewBox="0 0 15 15"><circle cx="7.5" cy="7.5" r="6" fill="#4f6c80" stroke="#273b48" stroke-width="2.1"/></svg>
<div style="top:905.6px;line-height:23px;height:23px;font-size:18px;color:#151515;white-space:pre;letter-spacing:-0.07px;left:139px;">Distortion Product Ratio (H2)</div>
<svg style="left:88px;top:934px;" width="18" height="18" viewBox="0 0 18 18"><rect width="18" height="18" fill="#3f6285"/><path d="M4.2 9.6L7.6 13L13.8 5.2" stroke="#fff" stroke-width="2.2" fill="none"/></svg>
<svg style="left:114.5px;top:935.5px;" width="15" height="15" viewBox="0 0 15 15"><circle cx="7.5" cy="7.5" r="6" fill="#4f6c80" stroke="#273b48" stroke-width="2.1"/></svg>
<div style="top:932.6px;line-height:23px;height:23px;font-size:18px;color:#151515;white-space:pre;letter-spacing:-0.11px;left:139px;">Distortion Product Level (H2)</div>
<svg style="left:88px;top:961px;" width="18" height="18" viewBox="0 0 18 18"><rect width="18" height="18" fill="#3f6285"/><path d="M4.2 9.6L7.6 13L13.8 5.2" stroke="#fff" stroke-width="2.2" fill="none"/></svg>
<svg style="left:114.5px;top:962.5px;" width="15" height="15" viewBox="0 0 15 15"><circle cx="7.5" cy="7.5" r="6" fill="#4f6c80" stroke="#273b48" stroke-width="2.1"/></svg>
<div style="top:959.6px;line-height:23px;height:23px;font-size:18px;color:#151515;white-space:pre;letter-spacing:-1.00px;left:139px;">SINAD</div>
<svg style="left:88px;top:988px;" width="18" height="18" viewBox="0 0 18 18"><rect width="18" height="18" fill="#3f6285"/><path d="M4.2 9.6L7.6 13L13.8 5.2" stroke="#fff" stroke-width="2.2" fill="none"/></svg>
<svg style="left:114.5px;top:989.5px;" width="15" height="15" viewBox="0 0 15 15"><circle cx="7.5" cy="7.5" r="6" fill="#4f6c80" stroke="#273b48" stroke-width="2.1"/></svg>
<div style="top:986.6px;line-height:23px;height:23px;font-size:18px;color:#151515;white-space:pre;letter-spacing:-0.46px;left:139px;">Noise Level</div>
<svg style="left:88px;top:1015px;" width="18" height="18" viewBox="0 0 18 18"><rect width="18" height="18" fill="#3f6285"/><path d="M4.2 9.6L7.6 13L13.8 5.2" stroke="#fff" stroke-width="2.2" fill="none"/></svg>
<svg style="left:114.5px;top:1016.5px;" width="15" height="15" viewBox="0 0 15 15"><circle cx="7.5" cy="7.5" r="6" fill="#4f6c80" stroke="#273b48" stroke-width="2.1"/></svg>
<div style="top:1013.6px;line-height:23px;height:23px;font-size:18px;color:#151515;white-space:pre;letter-spacing:-0.37px;left:139px;">Noise Ratio</div>
<div style="left:395px;top:740px;width:25px;height:28px;background:#f0f0f0;"></div>
<div style="left:407px;top:346px;width:2px;height:556px;background:#6e6e6e;"></div>
<div style="left:57px;top:1039px;width:23px;height:2px;background:#3a4a55;"></div>
<div style="left:0px;top:1067px;width:420px;height:51px;background:#4d6b81;"></div>
<div style="left:200px;top:1070.5px;width:3.5px;height:3.5px;background:#8aa3b6;border-radius:2px;"></div>
<div style="left:209px;top:1070.5px;width:3.5px;height:3.5px;background:#8aa3b6;border-radius:2px;"></div>
<div style="left:218px;top:1070.5px;width:3.5px;height:3.5px;background:#8aa3b6;border-radius:2px;"></div>
<div style="top:1083.3px;line-height:30px;height:30px;font-size:23px;color:#fff;white-space:pre;font-weight:bold;letter-spacing:0.86px;left:7px;">Monitors/Meters</div>
<svg style="left:391px;top:1086px;" width="20" height="20" viewBox="0 0 20 20"><path d="M8 3H2.5V17.5H17V12" stroke="#fff" stroke-width="2.4" fill="none"/><path d="M11 1.5H18.5V9L15.8 6.3L10.5 11.6L8.4 9.5L13.7 4.2Z" fill="#fff"/></svg>
<div style="left:0px;top:1118px;width:420px;height:37px;background:#dbe3e7;"></div>
<div style="left:0px;top:1120px;width:34px;height:33px;background:#7db1e8;"></div>
<svg style="left:5px;top:1124px;" width="24" height="24" viewBox="0 0 24 24"><rect width="24" height="24" fill="#2a4152"/><path d="M6.5 1V23M1 6.5H23" stroke="#456073" stroke-width="0.8" fill="none"/><path d="M12 1V23M1 12H23" stroke="#456073" stroke-width="0.8" fill="none"/><path d="M17.5 1V23M1 17.5H23" stroke="#456073" stroke-width="0.8" fill="none"/><path d="M1.5 12.5C4.5 4.5 8.5 4.5 12 12S19 20 22.5 11.5" stroke="#fff" stroke-width="1.6" fill="none"/></svg>
<svg style="left:39px;top:1124px;" width="24" height="24" viewBox="0 0 24 24"><rect width="24" height="24" fill="#2b4163"/><path d="M6.5 1V23M1 6.5H23" stroke="#4c61a3" stroke-width="0.8" fill="none"/><path d="M12 1V23M1 12H23" stroke="#4c61a3" stroke-width="0.8" fill="none"/><path d="M17.5 1V23M1 17.5H23" stroke="#4c61a3" stroke-width="0.8" fill="none"/><path d="M3 21H6.5L8 4L9.5 21L11.5 14L13 21L14.5 17L16 21H21" stroke="#fff" stroke-width="1.5" fill="none" stroke-linejoin="round"/></svg>
<svg style="left:74px;top:1124px;" width="24" height="24" viewBox="0 0 24 24"><rect width="24" height="24" fill="#2d4759"/><path d="M9 2L3 7L9 12V8.7H21V5.3H9Z" fill="#fff"/><path d="M15 12.5L21 17.5L15 22.5V19.2H3V15.8H15Z" fill="none" stroke="#fff" stroke-width="1.3"/></svg>
<svg style="left:108px;top:1124px;" width="24" height="24" viewBox="0 0 24 24"><rect width="24" height="24" fill="#2b4163"/><path d="M6.5 1V23M1 6.5H23" stroke="#4c61a3" stroke-width="0.8" fill="none"/><path d="M12 1V23M1 12H23" stroke="#4c61a3" stroke-width="0.8" fill="none"/><path d="M17.5 1V23M1 17.5H23" stroke="#4c61a3" stroke-width="0.8" fill="none"/><path d="M2 16H5V7H9.5V16H14V7H18.5V16H22" stroke="#fff" stroke-width="1.7" fill="none"/></svg>
<svg style="left:142.5px;top:1124px;" width="24" height="24" viewBox="0 0 24 24"><rect width="24" height="24" fill="#2d4759"/><path d="M6.5 1V23M1 6.5H23" stroke="#456073" stroke-width="0.8" fill="none"/><path d="M12 1V23M1 12H23" stroke="#456073" stroke-width="0.8" fill="none"/><path d="M17.5 1V23M1 17.5H23" stroke="#456073" stroke-width="0.8" fill="none"/><path d="M1.5 14C4 7 7.5 7 10.5 14S17.5 22 22 12" stroke="#fff" stroke-width="1.7" fill="none"/><path d="M17 2V10M13 6H21" stroke="#fff" stroke-width="2.6"/></svg>
<svg style="left:177px;top:1124px;" width="24" height="24" viewBox="0 0 24 24"><rect width="24" height="24" fill="#2b4163"/><path d="M6.5 1V23M1 6.5H23" stroke="#4c61a3" stroke-width="0.8" fill="none"/><path d="M12 1V23M1 12H23" stroke="#4c61a3" stroke-width="0.8" fill="none"/><path d="M17.5 1V23M1 17.5H23" stroke="#4c61a3" stroke-width="0.8" fill="none"/><path d="M10.5 4.7H22M10.5 9.6H22M10.5 14.5H22M10.5 19.4H22" stroke="#fff" stroke-width="2.9"/></svg>
<div style="left:212px;top:1124px;width:1.5px;height:24px;background:#f6f8f9;"></div>
<div style="left:219px;top:1124px;width:66px;height:23.5px;border-radius:4px;background:linear-gradient(#74de68,#3fbb38);border:1.5px solid #4aa844;"></div>
<div style="left:262px;top:1127px;width:20px;height:17.5px;border-radius:3px;background:linear-gradient(#b9eeb0 0%,#8fdc84 45%,#3f9a3a 55%,#55b04e 100%);border:1px solid #2c7a2c;"></div>
<div style="top:1126.3px;line-height:21px;height:21px;font-size:16px;color:#17631a;white-space:pre;font-weight:bold;letter-spacing:0.00px;left:227px;">ON</div>
<div style="left:0px;top:1155px;width:420px;height:342px;background:#f0f0f0;"></div>
<div style="left:6px;top:1161px;width:406px;height:326.5px;background:#fff;"></div>
<svg style="left:67.5px;top:1183px;" width="307.5" height="258" viewBox="0 0 307.5 258"><rect x="0" y="0" width="307.5" height="258" fill="#fff"/><path d="M15.4 0V258" stroke="#e9e9e9" stroke-width="1"/><path d="M30.8 0V258" stroke="#e9e9e9" stroke-width="1"/><path d="M46.1 0V258" stroke="#e9e9e9" stroke-width="1"/><path d="M61.5 0V258" stroke="#e9e9e9" stroke-width="1"/><path d="M76.9 0V258" stroke="#c6c6c6" stroke-width="1.1"/><path d="M92.2 0V258" stroke="#e9e9e9" stroke-width="1"/><path d="M107.6 0V258" stroke="#e9e9e9" stroke-width="1"/><path d="M123.0 0V258" stroke="#e9e9e9" stroke-width="1"/><path d="M138.4 0V258" stroke="#e9e9e9" stroke-width="1"/><path d="M153.8 0V258" stroke="#c6c6c6" stroke-width="1.1"/><path d="M169.1 0V258" stroke="#e9e9e9" stroke-width="1"/><path d="M184.5 0V258" stroke="#e9e9e9" stroke-width="1"/><path d="M199.9 0V258" stroke="#e9e9e9" stroke-width="1"/><path d="M215.2 0V258" stroke="#e9e9e9" stroke-width="1"/><path d="M230.6 0V258" stroke="#c6c6c6" stroke-width="1.1"/><path d="M246.0 0V258" stroke="#e9e9e9" stroke-width="1"/><path d="M261.4 0V258" stroke="#e9e9e9" stroke-width="1"/><path d="M276.8 0V258" stroke="#e9e9e9" stroke-width="1"/><path d="M292.1 0V258" stroke="#e9e9e9" stroke-width="1"/><path d="M0 25.8H307.5" stroke="#c6c6c6" stroke-width="1.1"/><path d="M0 51.6H307.5" stroke="#e9e9e9" stroke-width="1"/><path d="M0 77.4H307.5" stroke="#c6c6c6" stroke-width="1.1"/><path d="M0 103.2H307.5" stroke="#e9e9e9" stroke-width="1"/><path d="M0 129.0H307.5" stroke="#c6c6c6" stroke-width="1.1"/><path d="M0 154.8H307.5" stroke="#e9e9e9" stroke-width="1"/><path d="M0 180.6H307.5" stroke="#c6c6c6" stroke-width="1.1"/><path d="M0 206.4H307.5" stroke="#e9e9e9" stroke-width="1"/><path d="M0 232.2H307.5" stroke="#c6c6c6" stroke-width="1.1"/><polyline points="0.0,99.7 0.4,159.4 0.8,112.9 1.2,180.9 1.6,96.3 2.0,139.3 2.4,102.3 2.8,156.2 3.2,86.0 3.6,142.8 4.0,100.5 4.5,172.3 4.9,110.9 5.3,145.2 5.7,86.3 6.1,170.4 6.5,106.5 6.9,149.9 7.3,95.0 7.7,153.3 8.1,106.0 8.5,159.6 8.9,107.9 9.3,155.1 9.7,95.6 10.1,164.9 10.5,94.2 10.9,157.7 11.3,90.7 11.7,162.1 12.1,93.2 12.5,158.8 12.9,117.7 13.4,151.3 13.8,99.6 14.2,143.1 14.6,117.2 15.0,156.1 15.4,112.2 15.8,159.3 16.2,98.1 16.6,161.7 17.0,101.2 17.4,159.9 17.8,102.9 18.2,151.1 18.6,101.8 19.0,155.9 19.4,101.1 19.8,157.7 20.2,100.8 20.6,163.0 21.0,96.6 21.4,157.7 21.8,102.2 22.3,159.8 22.7,94.4 23.1,166.9 23.5,115.9 23.9,157.3 24.3,96.3 24.7,163.4 25.1,104.0 25.5,157.4 25.9,97.0 26.3,149.8 26.7,99.5 27.1,162.0 27.5,101.1 27.9,162.6 28.3,92.7 28.7,165.4 29.1,109.4 29.5,150.1 29.9,104.9 30.3,152.6 30.8,100.8 31.2,148.9 31.6,99.6 32.0,159.2 32.4,102.5 32.8,162.3 33.2,75.3 33.6,167.4 34.0,107.3 34.4,166.8 34.8,98.2 35.2,159.7 35.6,96.2 36.0,150.1 36.4,88.1 36.8,154.7 37.2,99.4 37.6,157.0 38.0,109.2 38.4,150.6 38.8,83.0 39.2,155.6 39.7,100.9 40.1,158.4 40.5,103.5 40.9,143.3 41.3,105.3 41.7,156.8 42.1,86.9 42.5,166.7 42.9,115.9 43.3,169.3 43.7,98.2 44.1,153.6 44.5,90.1 44.9,160.5 45.3,92.0 45.7,169.6 46.1,90.0 46.5,141.4 46.9,96.7 47.3,164.4 47.7,97.1 48.1,162.3 48.6,93.0 49.0,138.8 49.4,94.8 49.8,161.3 50.2,104.3 50.6,175.4 51.0,78.7 51.4,161.1 51.8,101.0 52.2,156.5 52.6,115.3 53.0,183.7 53.4,94.0 53.8,163.5 54.2,84.1 54.6,150.4 55.0,99.3 55.4,166.1 55.8,96.9 56.2,162.8 56.6,96.4 57.0,165.8 57.5,110.0 57.9,153.1 58.3,94.2 58.7,155.1 59.1,112.2 59.5,161.8 59.9,100.6 60.3,160.9 60.7,95.2 61.1,137.0 61.5,101.4 61.9,149.0 62.3,102.0 62.7,151.6 63.1,108.3 63.5,167.1 63.9,105.2 64.3,164.2 64.7,103.4 65.1,161.6 65.5,105.4 66.0,149.4 66.4,91.8 66.8,139.7 67.2,115.6 67.6,149.7 68.0,98.0 68.4,153.0 68.8,104.0 69.2,155.9 69.6,100.2 70.0,159.1 70.4,104.9 70.8,161.5 71.2,116.9 71.6,149.3 72.0,110.0 72.4,152.0 72.8,95.8 73.2,152.6 73.6,98.9 74.0,163.6 74.4,116.8 74.9,167.1 75.3,99.5 75.7,153.8 76.1,90.9 76.5,158.1 76.9,94.2 77.3,142.3 77.7,84.3 78.1,160.6 78.5,90.6 78.9,184.8 79.3,79.5 79.7,153.9 80.1,99.5 80.5,160.6 80.9,106.3 81.3,171.6 81.7,102.8 82.1,151.7 82.5,106.8 82.9,159.3 83.3,115.4 83.8,158.4 84.2,104.6 84.6,175.3 85.0,96.5 85.4,140.5 85.8,97.0 86.2,167.7 86.6,107.7 87.0,165.3 87.4,94.4 87.8,165.9 88.2,91.5 88.6,161.3 89.0,100.0 89.4,156.1 89.8,95.1 90.2,169.0 90.6,97.2 91.0,156.0 91.4,108.2 91.8,158.2 92.2,102.7 92.7,149.7 93.1,101.1 93.5,153.4 93.9,104.9 94.3,158.8 94.7,96.3 95.1,165.6 95.5,91.6 95.9,146.8 96.3,93.3 96.7,139.1 97.1,117.2 97.5,157.2 97.9,87.6 98.3,161.8 98.7,94.7 99.1,170.3 99.5,102.7 99.9,163.0 100.3,89.3 100.7,164.3 101.2,101.5 101.6,162.5 102.0,93.8 102.4,137.9 102.8,97.6 103.2,175.6 103.6,106.2 104.0,151.1 104.4,106.0 104.8,151.2 105.2,121.5 105.6,151.2 106.0,103.7 106.4,147.0 106.8,103.8 107.2,148.1 107.6,95.7 108.0,159.6 108.4,102.7 108.8,157.7 109.2,107.0 109.6,158.8 110.1,102.6 110.5,161.1 110.9,105.0 111.3,154.5 111.7,95.1 112.1,141.8 112.5,98.8 112.9,149.6 113.3,98.0 113.7,156.0 114.1,112.3 114.5,147.4 114.9,106.4 115.3,137.0 115.7,94.3 116.1,151.1 116.5,99.9 116.9,150.5 117.3,100.2 117.7,170.0 118.1,98.2 118.5,153.9 119.0,101.8 119.4,168.8 119.8,106.9 120.2,148.6 120.6,93.8 121.0,152.6 121.4,114.0 121.8,173.9 122.2,90.7 122.6,138.1 123.0,87.2 123.4,164.9 123.8,101.1 124.2,151.4 124.6,110.1 125.0,166.9 125.4,107.8 125.8,161.0 126.2,94.9 126.6,160.0 127.0,114.3 127.5,167.8 127.9,87.6 128.3,165.3 128.7,116.8 129.1,164.3 129.5,102.6 129.9,157.0 130.3,99.9 130.7,162.2 131.1,98.9 131.5,167.1 131.9,94.6 132.3,155.7 132.7,93.5 133.1,165.7 133.5,95.0 133.9,159.6 134.3,102.1 134.7,154.1 135.1,105.7 135.5,151.6 135.9,113.6 136.4,156.2 136.8,105.9 137.2,159.2 137.6,105.8 138.0,165.7 138.4,98.4 138.8,150.2 139.2,114.4 139.6,159.0 140.0,119.4 140.4,158.1 140.8,96.3 141.2,162.1 141.6,98.8 142.0,150.5 142.4,95.3 142.8,150.7 143.2,104.6 143.6,150.9 144.0,107.3 144.4,142.8 144.8,103.2 145.3,161.7 145.7,98.7 146.1,157.1 146.5,104.6 146.9,161.2 147.3,101.6 147.7,188.1 148.1,117.6 148.5,155.5 148.9,99.1 149.3,145.5 149.7,93.7 150.1,161.7 150.5,116.2 150.9,160.7 151.3,104.4 151.7,155.5 152.1,102.8 152.5,156.6 152.9,105.4 153.3,154.2 153.8,96.7 154.2,173.0 154.6,98.7 155.0,154.6 155.4,102.3 155.8,154.0 156.2,102.0 156.6,183.5 157.0,95.1 157.4,161.6 157.8,94.5 158.2,156.4 158.6,88.7 159.0,153.3 159.4,99.6 159.8,156.4 160.2,95.0 160.6,144.4 161.0,107.7 161.4,148.8 161.8,105.0 162.2,160.5 162.7,100.3 163.1,155.1 163.5,97.4 163.9,152.4 164.3,105.2 164.7,154.4 165.1,97.1 165.5,156.5 165.9,115.7 166.3,151.6 166.7,98.6 167.1,149.9 167.5,104.9 167.9,148.8 168.3,99.7 168.7,175.8 169.1,102.4 169.5,163.7 169.9,98.6 170.3,150.6 170.7,105.1 171.1,148.9 171.6,99.5 172.0,157.8 172.4,88.2 172.8,148.1 173.2,108.8 173.6,147.4 174.0,101.5 174.4,158.4 174.8,80.2 175.2,159.6 175.6,111.1 176.0,160.9 176.4,100.2 176.8,142.4 177.2,109.6 177.6,156.5 178.0,94.9 178.4,156.9 178.8,97.7 179.2,150.8 179.6,93.8 180.0,157.6 180.5,111.9 180.9,181.2 181.3,102.2 181.7,156.6 182.1,103.5 182.5,156.2 182.9,75.9 183.3,156.1 183.7,119.7 184.1,157.0 184.5,113.6 184.9,161.8 185.3,105.9 185.7,157.0 186.1,114.1 186.5,165.4 186.9,104.2 187.3,169.2 187.7,102.0 188.1,161.3 188.5,99.1 189.0,153.7 189.4,102.2 189.8,162.5 190.2,91.3 190.6,167.8 191.0,96.5 191.4,160.5 191.8,102.4 192.2,156.4 192.6,106.0 193.0,158.0 193.4,109.1 193.8,148.1 194.2,84.9 194.6,167.3 195.0,97.5 195.4,140.5 195.8,102.3 196.2,156.6 196.6,101.7 197.0,165.1 197.4,96.1 197.9,152.0 198.3,105.6 198.7,164.6 199.1,106.7 199.5,179.0 199.9,108.2 200.3,136.4 200.7,93.0 201.1,169.3 201.5,103.2 201.9,141.5 202.3,96.9 202.7,157.1 203.1,93.5 203.5,176.3 203.9,114.9 204.3,171.0 204.7,91.0 205.1,157.5 205.5,108.4 205.9,154.6 206.3,94.9 206.8,154.5 207.2,99.5 207.6,156.5 208.0,95.2 208.4,157.0 208.8,91.9 209.2,165.2 209.6,90.3 210.0,171.2 210.4,99.8 210.8,163.2 211.2,104.5 211.6,173.8 212.0,88.5 212.4,162.0 212.8,97.1 213.2,158.0 213.6,102.4 214.0,157.8 214.4,96.1 214.8,148.3 215.2,90.2 215.7,159.6 216.1,89.7 216.5,163.0 216.9,114.4 217.3,146.8 217.7,108.9 218.1,139.0 218.5,110.0 218.9,152.8 219.3,98.8 219.7,152.0 220.1,90.3 220.5,171.3 220.9,103.9 221.3,171.3 221.7,96.2 222.1,152.4 222.5,113.4 222.9,159.8 223.3,109.1 223.7,162.1 224.2,101.9 224.6,157.0 225.0,105.0 225.4,163.1 225.8,97.4 226.2,150.7 226.6,107.2 227.0,163.8 227.4,107.4 227.8,168.9 228.2,90.3 228.6,184.0 229.0,90.7 229.4,158.5 229.8,100.0 230.2,156.8 230.6,109.9 231.0,151.4 231.4,97.6 231.8,152.4 232.2,109.8 232.6,159.0 233.1,104.1 233.5,162.0 233.9,104.5 234.3,154.9 234.7,99.0 235.1,154.7 235.5,94.2 235.9,160.3 236.3,93.6 236.7,156.2 237.1,106.2 237.5,153.7 237.9,101.3 238.3,148.9 238.7,97.9 239.1,152.1 239.5,101.7 239.9,153.3 240.3,102.8 240.7,161.6 241.1,99.9 241.5,155.0 242.0,95.2 242.4,167.3 242.8,102.7 243.2,161.2 243.6,92.8 244.0,170.5 244.4,98.8 244.8,140.8 245.2,93.1 245.6,163.8 246.0,101.6 246.4,151.3 246.8,95.5 247.2,157.6 247.6,99.4 248.0,150.4 248.4,94.0 248.8,166.6 249.2,100.0 249.6,150.0 250.0,99.8 250.5,157.5 250.9,99.5 251.3,167.1 251.7,92.7 252.1,161.4 252.5,96.5 252.9,179.3 253.3,101.8 253.7,151.3 254.1,92.6 254.5,141.1 254.9,107.5 255.3,159.0 255.7,103.3 256.1,155.6 256.5,97.2 256.9,156.9 257.3,105.0 257.7,153.6 258.1,101.4 258.5,163.1 258.9,101.3 259.4,159.1 259.8,87.4 260.2,152.8 260.6,97.6 261.0,159.8 261.4,91.1 261.8,157.1 262.2,116.1 262.6,159.9 263.0,88.6 263.4,165.2 263.8,93.3 264.2,156.2 264.6,99.5 265.0,166.9 265.4,102.6 265.8,157.2 266.2,106.9 266.6,150.3 267.0,99.2 267.4,154.2 267.8,102.7 268.3,151.6 268.7,110.0 269.1,157.8 269.5,103.3 269.9,151.8 270.3,109.8 270.7,147.5 271.1,104.1 271.5,148.3 271.9,107.6 272.3,163.9 272.7,103.8 273.1,167.7 273.5,107.7 273.9,156.0 274.3,101.1 274.7,161.6 275.1,117.5 275.5,141.6 275.9,101.0 276.3,151.1 276.8,113.4 277.2,155.3 277.6,95.0 278.0,183.6 278.4,100.1 278.8,163.6 279.2,84.2 279.6,172.7 280.0,101.5 280.4,165.3 280.8,106.6 281.2,139.4 281.6,114.6 282.0,153.5 282.4,94.9 282.8,153.9 283.2,106.0 283.6,141.5 284.0,107.9 284.4,145.0 284.8,93.7 285.2,138.6 285.7,118.9 286.1,152.8 286.5,106.4 286.9,162.2 287.3,89.8 287.7,169.8 288.1,98.3 288.5,165.7 288.9,102.2 289.3,156.8 289.7,109.6 290.1,161.8 290.5,103.1 290.9,168.9 291.3,115.7 291.7,148.3 292.1,98.2 292.5,164.0 292.9,116.0 293.3,152.9 293.7,83.2 294.1,153.6 294.6,94.8 295.0,148.7 295.4,100.1 295.8,154.9 296.2,109.8 296.6,154.5 297.0,98.2 297.4,156.0 297.8,88.1 298.2,158.4 298.6,100.8 299.0,165.8 299.4,83.7 299.8,163.3 300.2,103.5 300.6,166.1 301.0,100.8 301.4,156.6 301.8,89.6 302.2,153.0 302.6,102.5 303.0,160.7 303.5,107.6 303.9,176.5 304.3,93.2 304.7,175.2 305.1,94.1 305.5,145.9 305.9,87.9 306.3,161.7 306.7,111.8 307.1,139.0 307.5,96.6" fill="none" stroke="#43589e" stroke-width="1.05" stroke-linejoin="round"/><polyline points="0.0,111.8 0.4,157.2 0.8,96.5 1.2,152.8 1.6,114.5 2.0,164.1 2.4,100.7 2.8,144.2 3.2,96.3 3.6,151.6 4.0,105.6 4.5,162.9 4.9,101.6 5.3,153.5 5.7,104.4 6.1,163.9 6.5,111.6 6.9,163.4 7.3,97.3 7.7,162.4 8.1,94.9 8.5,149.8 8.9,102.2 9.3,163.3 9.7,97.5 10.1,153.2 10.5,101.7 10.9,152.3 11.3,82.8 11.7,158.2 12.1,107.8 12.5,160.3 12.9,90.4 13.4,156.1 13.8,78.6 14.2,159.8 14.6,106.7 15.0,155.5 15.4,100.8 15.8,151.7 16.2,107.7 16.6,157.7 17.0,102.9 17.4,160.0 17.8,82.6 18.2,169.3 18.6,91.1 19.0,158.5 19.4,98.9 19.8,158.0 20.2,92.6 20.6,160.2 21.0,104.0 21.4,157.7 21.8,107.5 22.3,152.0 22.7,117.5 23.1,155.5 23.5,104.7 23.9,154.2 24.3,100.8 24.7,163.5 25.1,107.4 25.5,158.6 25.9,97.2 26.3,151.3 26.7,97.7 27.1,155.8 27.5,101.4 27.9,154.8 28.3,92.2 28.7,161.7 29.1,94.3 29.5,164.1 29.9,109.0 30.3,160.9 30.8,89.9 31.2,145.6 31.6,119.1 32.0,141.0 32.4,98.6 32.8,153.1 33.2,100.7 33.6,152.2 34.0,94.9 34.4,155.1 34.8,98.7 35.2,161.4 35.6,94.6 36.0,161.1 36.4,98.7 36.8,145.1 37.2,99.4 37.6,143.4 38.0,88.6 38.4,160.0 38.8,98.5 39.2,141.4 39.7,105.8 40.1,153.5 40.5,83.1 40.9,148.5 41.3,100.3 41.7,148.5 42.1,97.4 42.5,158.1 42.9,115.4 43.3,168.1 43.7,91.4 44.1,155.9 44.5,97.0 44.9,164.8 45.3,92.3 45.7,163.9 46.1,94.4 46.5,156.4 46.9,105.1 47.3,168.0 47.7,100.3 48.1,166.1 48.6,95.0 49.0,166.7 49.4,114.6 49.8,163.7 50.2,101.3 50.6,149.8 51.0,90.8 51.4,156.2 51.8,96.5 52.2,150.3 52.6,105.4 53.0,156.4 53.4,104.5 53.8,154.5 54.2,117.2 54.6,151.5 55.0,100.3 55.4,156.9 55.8,92.1 56.2,163.6 56.6,95.7 57.0,155.6 57.5,94.7 57.9,165.5 58.3,99.3 58.7,161.8 59.1,106.1 59.5,159.8 59.9,115.4 60.3,147.7 60.7,96.3 61.1,143.6 61.5,85.0 61.9,150.8 62.3,111.0 62.7,158.8 63.1,106.8 63.5,152.7 63.9,104.4 64.3,158.3 64.7,107.0 65.1,153.6 65.5,99.5 66.0,155.1 66.4,121.1 66.8,157.8 67.2,107.9 67.6,156.5 68.0,103.1 68.4,161.2 68.8,99.5 69.2,155.9 69.6,94.4 70.0,149.5 70.4,85.4 70.8,158.5 71.2,96.2 71.6,161.9 72.0,97.5 72.4,162.0 72.8,115.6 73.2,169.9 73.6,104.1 74.0,163.7 74.4,108.2 74.9,155.5 75.3,117.9 75.7,162.1 76.1,100.3 76.5,159.2 76.9,98.5 77.3,155.7 77.7,91.8 78.1,157.0 78.5,104.9 78.9,159.0 79.3,99.8 79.7,141.7 80.1,99.8 80.5,153.3 80.9,98.7 81.3,159.8 81.7,112.6 82.1,159.3 82.5,95.9 82.9,158.8 83.3,116.6 83.8,160.0 84.2,104.0 84.6,148.2 85.0,99.1 85.4,150.6 85.8,104.9 86.2,163.5 86.6,93.4 87.0,156.7 87.4,116.5 87.8,149.9 88.2,100.9 88.6,138.6 89.0,89.6 89.4,147.2 89.8,122.2 90.2,157.9 90.6,102.4 91.0,138.3 91.4,96.2 91.8,161.4 92.2,100.7 92.7,160.7 93.1,103.7 93.5,156.8 93.9,99.2 94.3,152.3 94.7,89.4 95.1,156.8 95.5,92.8 95.9,142.8 96.3,109.1 96.7,164.4 97.1,86.8 97.5,161.3 97.9,88.4 98.3,154.3 98.7,101.4 99.1,165.3 99.5,91.7 99.9,154.1 100.3,111.7 100.7,157.6 101.2,108.6 101.6,149.2 102.0,107.6 102.4,147.0 102.8,108.8 103.2,164.9 103.6,96.8 104.0,159.8 104.4,98.0 104.8,159.4 105.2,100.8 105.6,153.4 106.0,91.8 106.4,160.2 106.8,107.3 107.2,145.2 107.6,82.4 108.0,159.3 108.4,100.4 108.8,154.1 109.2,119.8 109.6,157.3 110.1,102.4 110.5,158.7 110.9,91.0 111.3,159.5 111.7,103.2 112.1,139.5 112.5,101.7 112.9,155.0 113.3,94.4 113.7,155.0 114.1,101.1 114.5,157.7 114.9,102.8 115.3,164.8 115.7,90.2 116.1,168.5 116.5,95.6 116.9,157.8 117.3,96.2 117.7,151.4 118.1,100.3 118.5,160.7 119.0,111.4 119.4,158.8 119.8,91.9 120.2,165.0 120.6,96.3 121.0,159.1 121.4,99.5 121.8,139.4 122.2,93.3 122.6,166.5 123.0,112.2 123.4,159.1 123.8,118.9 124.2,148.5 124.6,99.0 125.0,152.6 125.4,113.5 125.8,148.6 126.2,92.6 126.6,159.1 127.0,96.0 127.5,157.2 127.9,89.6 128.3,173.9 128.7,72.8 129.1,159.3 129.5,101.8 129.9,181.1 130.3,104.3 130.7,155.0 131.1,95.7 131.5,151.1 131.9,102.0 132.3,156.4 132.7,112.8 133.1,156.6 133.5,99.7 133.9,156.6 134.3,116.0 134.7,158.3 135.1,106.9 135.5,151.2 135.9,97.1 136.4,168.8 136.8,92.8 137.2,154.8 137.6,93.8 138.0,165.7 138.4,100.0 138.8,155.1 139.2,83.3 139.6,154.1 140.0,105.3 140.4,151.1 140.8,118.1 141.2,154.9 141.6,112.1 142.0,164.0 142.4,101.1 142.8,160.0 143.2,94.9 143.6,160.3 144.0,106.1 144.4,144.9 144.8,87.8 145.3,163.9 145.7,103.4 146.1,162.6 146.5,108.3 146.9,156.5 147.3,103.7 147.7,154.7 148.1,108.5 148.5,159.8 148.9,104.1 149.3,158.4 149.7,95.0 150.1,154.0 150.5,114.3 150.9,164.7 151.3,97.2 151.7,156.2 152.1,95.6 152.5,149.1 152.9,100.5 153.3,155.3 153.8,95.7 154.2,161.6 154.6,116.7 155.0,170.9 155.4,99.1 155.8,161.7 156.2,98.7 156.6,156.7 157.0,116.7 157.4,164.8 157.8,111.9 158.2,158.7 158.6,100.5 159.0,140.9 159.4,96.7 159.8,137.3 160.2,106.8 160.6,155.5 161.0,99.6 161.4,154.2 161.8,103.8 162.2,138.8 162.7,97.9 163.1,156.1 163.5,95.8 163.9,160.3 164.3,113.9 164.7,143.8 165.1,96.8 165.5,156.0 165.9,102.9 166.3,164.9 166.7,99.2 167.1,159.9 167.5,95.1 167.9,156.1 168.3,105.0 168.7,140.7 169.1,93.5 169.5,144.7 169.9,102.6 170.3,155.9 170.7,99.8 171.1,159.8 171.6,100.2 172.0,158.8 172.4,95.1 172.8,157.3 173.2,95.5 173.6,170.5 174.0,110.7 174.4,140.7 174.8,95.4 175.2,152.8 175.6,95.5 176.0,161.4 176.4,117.9 176.8,153.0 177.2,97.3 177.6,149.9 178.0,100.0 178.4,152.4 178.8,81.2 179.2,150.6 179.6,97.2 180.0,153.9 180.5,106.8 180.9,157.3 181.3,98.6 181.7,140.7 182.1,98.5 182.5,162.6 182.9,108.6 183.3,161.4 183.7,107.9 184.1,164.0 184.5,90.5 184.9,159.6 185.3,92.0 185.7,150.8 186.1,95.5 186.5,160.2 186.9,93.1 187.3,154.6 187.7,111.5 188.1,145.8 188.5,100.0 189.0,154.4 189.4,102.9 189.8,149.7 190.2,108.9 190.6,152.8 191.0,105.1 191.4,149.3 191.8,102.0 192.2,138.2 192.6,108.1 193.0,141.5 193.4,107.0 193.8,138.8 194.2,104.4 194.6,156.1 195.0,101.6 195.4,166.3 195.8,113.7 196.2,155.8 196.6,112.9 197.0,146.0 197.4,94.6 197.9,151.7 198.3,93.3 198.7,163.4 199.1,95.4 199.5,143.8 199.9,110.1 200.3,153.9 200.7,108.1 201.1,152.5 201.5,105.0 201.9,154.3 202.3,108.8 202.7,148.1 203.1,105.9 203.5,168.0 203.9,105.2 204.3,150.1 204.7,91.9 205.1,158.5 205.5,105.7 205.9,160.9 206.3,96.5 206.8,163.8 207.2,97.9 207.6,160.6 208.0,102.5 208.4,160.9 208.8,115.3 209.2,151.7 209.6,104.4 210.0,163.1 210.4,89.9 210.8,156.5 211.2,98.7 211.6,160.1 212.0,99.9 212.4,155.2 212.8,91.4 213.2,142.5 213.6,93.6 214.0,153.6 214.4,95.0 214.8,152.9 215.2,96.2 215.7,165.6 216.1,103.2 216.5,159.2 216.9,107.8 217.3,156.3 217.7,116.8 218.1,155.7 218.5,96.0 218.9,149.1 219.3,104.0 219.7,162.3 220.1,104.5 220.5,138.3 220.9,101.1 221.3,149.8 221.7,96.1 222.1,152.2 222.5,105.5 222.9,161.0 223.3,104.5 223.7,151.8 224.2,97.0 224.6,156.9 225.0,102.0 225.4,141.2 225.8,90.6 226.2,159.7 226.6,96.4 227.0,152.3 227.4,102.8 227.8,160.1 228.2,92.9 228.6,164.6 229.0,96.1 229.4,154.0 229.8,106.2 230.2,167.9 230.6,88.1 231.0,142.2 231.4,104.4 231.8,143.3 232.2,97.7 232.6,144.0 233.1,106.0 233.5,160.0 233.9,102.6 234.3,155.7 234.7,107.9 235.1,154.6 235.5,111.1 235.9,151.3 236.3,98.9 236.7,169.9 237.1,92.0 237.5,169.7 237.9,94.7 238.3,163.1 238.7,87.4 239.1,166.7 239.5,108.0 239.9,155.3 240.3,109.2 240.7,154.4 241.1,103.6 241.5,153.8 242.0,100.1 242.4,137.3 242.8,107.7 243.2,149.0 243.6,107.5 244.0,150.2 244.4,89.2 244.8,159.8 245.2,116.4 245.6,153.3 246.0,102.8 246.4,163.5 246.8,101.1 247.2,156.1 247.6,108.7 248.0,167.6 248.4,107.9 248.8,144.3 249.2,107.4 249.6,146.3 250.0,101.1 250.5,152.0 250.9,100.0 251.3,150.6 251.7,93.9 252.1,175.6 252.5,87.7 252.9,154.9 253.3,90.6 253.7,153.0 254.1,94.6 254.5,155.8 254.9,93.9 255.3,151.6 255.7,114.6 256.1,158.1 256.5,105.7 256.9,161.9 257.3,93.1 257.7,156.5 258.1,93.9 258.5,160.6 258.9,105.0 259.4,151.2 259.8,101.3 260.2,151.0 260.6,101.6 261.0,155.9 261.4,100.1 261.8,158.8 262.2,104.4 262.6,154.4 263.0,108.7 263.4,167.6 263.8,106.0 264.2,155.6 264.6,97.3 265.0,145.6 265.4,110.4 265.8,152.1 266.2,98.0 266.6,159.7 267.0,102.9 267.4,153.6 267.8,84.6 268.3,165.1 268.7,103.9 269.1,154.5 269.5,89.8 269.9,170.0 270.3,102.0 270.7,159.1 271.1,90.8 271.5,162.9 271.9,106.1 272.3,164.9 272.7,90.0 273.1,142.6 273.5,98.5 273.9,168.2 274.3,95.0 274.7,155.9 275.1,108.7 275.5,160.8 275.9,106.8 276.3,150.7 276.8,108.7 277.2,161.7 277.6,101.3 278.0,160.7 278.4,105.6 278.8,158.8 279.2,117.5 279.6,149.3 280.0,87.5 280.4,163.4 280.8,110.2 281.2,162.0 281.6,100.9 282.0,155.9 282.4,104.0 282.8,156.2 283.2,103.4 283.6,151.6 284.0,96.7 284.4,153.9 284.8,118.3 285.2,167.4 285.7,96.2 286.1,166.0 286.5,92.4 286.9,143.2 287.3,99.1 287.7,140.7 288.1,99.8 288.5,157.6 288.9,106.3 289.3,156.7 289.7,107.0 290.1,160.2 290.5,107.6 290.9,138.7 291.3,97.8 291.7,154.5 292.1,100.5 292.5,157.8 292.9,102.4 293.3,140.7 293.7,100.5 294.1,152.1 294.6,109.1 295.0,152.9 295.4,97.6 295.8,152.4 296.2,111.7 296.6,140.6 297.0,109.3 297.4,155.6 297.8,119.6 298.2,157.7 298.6,107.6 299.0,164.8 299.4,91.0 299.8,150.0 300.2,86.0 300.6,165.9 301.0,94.0 301.4,138.3 301.8,91.5 302.2,164.9 302.6,103.8 303.0,166.1 303.5,120.6 303.9,136.3 304.3,94.8 304.7,150.8 305.1,102.1 305.5,159.4 305.9,102.5 306.3,140.1 306.7,95.7 307.1,159.4 307.5,107.0" fill="none" stroke="#b43643" stroke-width="1.1" stroke-linejoin="round"/><rect x="0" y="0" width="307.5" height="258" fill="none" stroke="#5a5a5a" stroke-width="1.6"/></svg>
<div style="top:1160.8px;line-height:22px;height:22px;font-size:17px;color:#111;white-space:pre;font-family:'Liberation Serif',serif;letter-spacing:0.89px;left:197px;">Scope</div>
<div style="top:1197.3px;line-height:23px;height:23px;font-size:18px;color:#151515;white-space:pre;left:40.9766px;">8u</div>
<div style="top:1249.8px;line-height:23px;height:23px;font-size:18px;color:#151515;white-space:pre;left:40.9766px;">4u</div>
<div style="top:1301.3px;line-height:23px;height:23px;font-size:18px;color:#151515;white-space:pre;left:50.9883px;">0</div>
<div style="top:1352.3px;line-height:23px;height:23px;font-size:18px;color:#151515;white-space:pre;left:34.9805px;">-4u</div>
<div style="top:1404.3px;line-height:23px;height:23px;font-size:18px;color:#151515;white-space:pre;left:34.9805px;">-8u</div>
<div style="top:1446.3px;line-height:23px;height:23px;font-size:18px;color:#151515;white-space:pre;left:62.4941px;">0</div>
<div style="top:1446.3px;line-height:23px;height:23px;font-size:18px;color:#151515;white-space:pre;left:126.99px;">50m</div>
<div style="top:1446.3px;line-height:23px;height:23px;font-size:18px;color:#151515;white-space:pre;left:198.984px;">100m</div>
<div style="top:1446.3px;line-height:23px;height:23px;font-size:18px;color:#151515;white-space:pre;left:275.984px;">150m</div>
<div style="top:1464.8px;line-height:23px;height:23px;font-size:18px;color:#151515;white-space:pre;letter-spacing:-0.67px;left:191.5px;">Time (s)</div>
<div style="left:-71px;top:1299px;width:183px;height:24px;line-height:24px;font-size:18px;color:#151515;text-align:center;white-space:nowrap;transform:rotate(-90deg);letter-spacing:-0.35px;">Instantaneous Level (V)</div>
<div style="left:420px;top:147px;width:10px;height:1350px;background:#4d6b81;"></div>
<div style="left:423.5px;top:796px;width:3.5px;height:3.5px;background:#a9bccb;border-radius:2px;"></div>
<div style="left:423.5px;top:804.5px;width:3.5px;height:3.5px;background:#a9bccb;border-radius:2px;"></div>
<div style="left:423.5px;top:813px;width:3.5px;height:3.5px;background:#a9bccb;border-radius:2px;"></div>
<div style="left:430px;top:147px;width:548px;height:1350px;background:#b5c6d0;"></div>
<div style="left:441px;top:156.5px;width:210.5px;height:42px;border-radius:7px;border:3px solid #44687a;background:linear-gradient(#bfdcee,#aacee6);"></div>
<svg style="left:510px;top:168px;" width="17" height="20" viewBox="0 0 17 20"><path d="M0.5 0.5L16.5 10L0.5 19.5Z" fill="#2d4759"/></svg>
<div style="top:165.8px;line-height:26px;height:26px;font-size:20px;color:#2d4759;white-space:pre;font-weight:bold;letter-spacing:-0.31px;left:535px;">Start</div>
<div style="left:439.5px;top:209px;width:19px;height:19px;border-radius:4px;border:1.3px solid #848c92;background:linear-gradient(#fafafa,#f0f1f2);"></div>
<div style="top:208.8px;line-height:23px;height:23px;font-size:18px;color:#151515;white-space:pre;letter-spacing:-0.30px;left:469px;">Append Graph Data</div>
<div style="left:435px;top:241px;width:539px;height:2.2px;background:linear-gradient(#dfe7ec,#9fb2bd);"></div>
<div style="left:443px;top:258px;width:3.5px;height:3.5px;background:#111;"></div>
<div style="top:247.3px;line-height:25px;height:25px;font-size:19.5px;color:#000;white-space:pre;font-weight:bold;letter-spacing:-0.24px;left:455px;">Generator</div>
<div style="top:283.8px;line-height:23px;height:23px;font-size:18px;color:#151515;white-space:pre;letter-spacing:-0.09px;left:511.5px;">Waveform:</div>
<div style="left:612px;top:278px;width:146px;height:31.5px;background:#fff;border:1px solid #e8eef1;"></div>
<div style="top:283.05px;line-height:23px;height:23px;font-size:18px;color:#151515;white-space:pre;letter-spacing:-0.76px;left:617px;">Sine</div>
<svg style="left:738.5px;top:290.25px;" width="13" height="8" viewBox="0 0 13 8"><path d="M1 1L6.5 7L12 1" stroke="#4a4a4a" stroke-width="1.4" fill="none"/></svg>
<svg style="left:613.5px;top:329px;" width="20" height="20" viewBox="0 0 20 20"><circle cx="10" cy="10" r="9" fill="#0a5bb5"/><circle cx="10" cy="10" r="4" fill="#fff"/></svg>
<div style="top:328.8px;line-height:23px;height:23px;font-size:18px;color:#151515;white-space:pre;letter-spacing:-0.23px;left:642.5px;">High Performance Sine Generator</div>
<div style="left:660px;top:368.5px;width:19px;height:19px;border-radius:4px;border:1.3px solid #848c92;background:linear-gradient(#fafafa,#f0f1f2);"></div>
<div style="top:367.8px;line-height:23px;height:23px;font-size:18px;color:#151515;white-space:pre;letter-spacing:-0.15px;left:689px;">Precision Tune</div>
<svg style="left:613.5px;top:410px;" width="20" height="20" viewBox="0 0 20 20"><circle cx="10" cy="10" r="8.6" fill="#f6f7f8" stroke="#8a8f94" stroke-width="1.3"/></svg>
<div style="top:409.8px;line-height:23px;height:23px;font-size:18px;color:#151515;white-space:pre;letter-spacing:-0.50px;left:642.5px;">DAC Generator</div>
<div style="top:455.3px;line-height:23px;height:23px;font-size:18px;color:#151515;white-space:pre;letter-spacing:-0.44px;left:471px;">Start Frequency:</div>
<div style="left:612.5px;top:450px;width:177px;height:32.5px;background:#fff;border:1.3px solid #7f8b93;border-radius:3px;"></div>
<div style="top:455.55px;line-height:23px;height:23px;font-size:18px;color:#151515;white-space:pre;letter-spacing:-0.73px;left:617.5px;">20.0000 kHz</div>
<svg style="left:770px;top:462.75px;" width="13" height="8" viewBox="0 0 13 8"><path d="M1 1L6.5 7L12 1" stroke="#4a4a4a" stroke-width="1.4" fill="none"/></svg>
<div style="left:792.5px;top:449.5px;width:24.5px;height:16px;border-radius:3px;border:1.3px solid #4c6d80;background:linear-gradient(#8aa6b5,#5d8195);"></div>
<svg style="left:795.8px;top:451.3px;" width="18" height="12.5" viewBox="0 0 18 12.5"><path d="M1.5 10.5L9 2L16.5 10.5Z" fill="#fff"/></svg>
<div style="left:792.5px;top:467px;width:24.5px;height:16px;border-radius:3px;border:1.3px solid #4c6d80;background:linear-gradient(#8aa6b5,#5d8195);"></div>
<svg style="left:795.8px;top:468.8px;" width="18" height="12.5" viewBox="0 0 18 12.5"><path d="M1.5 2L9 10.5L16.5 2Z" fill="#fff"/></svg>
<div style="top:501.8px;line-height:23px;height:23px;font-size:18px;color:#151515;white-space:pre;letter-spacing:-0.41px;left:471px;">Stop Frequency:</div>
<div style="left:612.5px;top:497px;width:177px;height:32.5px;background:#fff;border:1.3px solid #7f8b93;border-radius:3px;"></div>
<div style="top:502.55px;line-height:23px;height:23px;font-size:18px;color:#151515;white-space:pre;letter-spacing:-0.81px;left:617.5px;">20.0000 Hz</div>
<svg style="left:770px;top:509.75px;" width="13" height="8" viewBox="0 0 13 8"><path d="M1 1L6.5 7L12 1" stroke="#4a4a4a" stroke-width="1.4" fill="none"/></svg>
<div style="left:792.5px;top:496.5px;width:24.5px;height:16px;border-radius:3px;border:1.3px solid #4c6d80;background:linear-gradient(#8aa6b5,#5d8195);"></div>
<svg style="left:795.8px;top:498.3px;" width="18" height="12.5" viewBox="0 0 18 12.5"><path d="M1.5 10.5L9 2L16.5 10.5Z" fill="#fff"/></svg>
<div style="left:792.5px;top:514px;width:24.5px;height:16px;border-radius:3px;border:1.3px solid #4c6d80;background:linear-gradient(#8aa6b5,#5d8195);"></div>
<svg style="left:795.8px;top:515.8px;" width="18" height="12.5" viewBox="0 0 18 12.5"><path d="M1.5 2L9 10.5L16.5 2Z" fill="#fff"/></svg>
<div style="top:546.3px;line-height:23px;height:23px;font-size:18px;color:#151515;white-space:pre;letter-spacing:-0.92px;left:542.5px;">Sweep:</div>
<div style="left:613px;top:541px;width:179px;height:31.5px;background:#fff;border:1px solid #e8eef1;"></div>
<div style="top:546.05px;line-height:23px;height:23px;font-size:18px;color:#151515;white-space:pre;letter-spacing:0.18px;left:618px;">Logarithmic</div>
<svg style="left:772.5px;top:553.25px;" width="13" height="8" viewBox="0 0 13 8"><path d="M1 1L6.5 7L12 1" stroke="#4a4a4a" stroke-width="1.4" fill="none"/></svg>
<div style="top:591.3px;line-height:23px;height:23px;font-size:18px;color:#151515;white-space:pre;letter-spacing:-0.29px;left:544px;">Points:</div>
<div style="left:612.5px;top:583px;width:96.5px;height:33px;background:#fff;border:1.3px solid #9aa5ac;border-radius:3px;"></div>
<div style="top:585.8px;line-height:23px;height:23px;font-size:18px;color:#151515;white-space:pre;left:616px;">31</div>
<div style="left:685.5px;top:585.5px;width:21px;height:28px;border:1px solid #d4d9dc;background:#fbfbfb;"></div>
<div style="left:686.5px;top:599px;width:19px;height:1px;background:#d4d9dc;"></div>
<svg style="left:691px;top:589px;" width="9" height="6" viewBox="0 0 9 6"><path d="M0 6H9L4.5 0Z" fill="#222"/></svg>
<svg style="left:691px;top:603.5px;" width="9" height="6" viewBox="0 0 9 6"><path d="M0 0H9L4.5 6Z" fill="#222"/></svg>
<div style="left:724px;top:585.5px;width:95px;height:31.5px;background:#fafbfb;border-radius:5px;border:1px solid #eef1f3;"></div>
<div style="top:590.55px;line-height:23px;height:23px;font-size:18px;color:#151515;white-space:pre;letter-spacing:-0.43px;left:750px;">Edit...</div>
<div style="top:635.3px;line-height:23px;height:23px;font-size:18px;color:#151515;white-space:pre;letter-spacing:-0.67px;left:553px;">Level:</div>
<div style="left:612.5px;top:630px;width:177px;height:32.5px;background:#fff;border:1.3px solid #7f8b93;border-radius:3px;"></div>
<div style="top:635.55px;line-height:23px;height:23px;font-size:18px;color:#151515;white-space:pre;letter-spacing:-0.64px;left:617.5px;">4.000 Vrms</div>
<svg style="left:770px;top:642.75px;" width="13" height="8" viewBox="0 0 13 8"><path d="M1 1L6.5 7L12 1" stroke="#4a4a4a" stroke-width="1.4" fill="none"/></svg>
<div style="left:792.5px;top:629.5px;width:24.5px;height:16px;border-radius:3px;border:1.3px solid #4c6d80;background:linear-gradient(#8aa6b5,#5d8195);"></div>
<svg style="left:795.8px;top:631.3px;" width="18" height="12.5" viewBox="0 0 18 12.5"><path d="M1.5 10.5L9 2L16.5 10.5Z" fill="#fff"/></svg>
<div style="left:792.5px;top:647px;width:24.5px;height:16px;border-radius:3px;border:1.3px solid #4c6d80;background:linear-gradient(#8aa6b5,#5d8195);"></div>
<svg style="left:795.8px;top:648.8px;" width="18" height="12.5" viewBox="0 0 18 12.5"><path d="M1.5 2L9 10.5L16.5 2Z" fill="#fff"/></svg>
<div style="top:679.3px;line-height:23px;height:23px;font-size:18px;color:#4f6472;white-space:pre;letter-spacing:-0.17px;left:545.5px;">Offset:</div>
<div style="left:613px;top:674px;width:176px;height:32px;background:#f0f0f0;border:2.5px solid #fdfdfd;"></div>
<div style="left:792.5px;top:673.5px;width:24.5px;height:16px;border-radius:3px;border:1.3px solid #8e979d;background:linear-gradient(#ffffff,#e9ecee);"></div>
<svg style="left:795.8px;top:675.3px;" width="18" height="12.5" viewBox="0 0 18 12.5"><path d="M1.5 10.5L9 2L16.5 10.5Z" fill="#f4f6f7"/></svg>
<div style="left:792.5px;top:691px;width:24.5px;height:16px;border-radius:3px;border:1.3px solid #8e979d;background:linear-gradient(#ffffff,#e9ecee);"></div>
<svg style="left:795.8px;top:692.8px;" width="18" height="12.5" viewBox="0 0 18 12.5"><path d="M1.5 2L9 10.5L16.5 2Z" fill="#f4f6f7"/></svg>
<div style="top:727.3px;line-height:23px;height:23px;font-size:18px;color:#151515;white-space:pre;letter-spacing:-1.60px;left:570.792px;">EQ:</div>
<div style="left:613px;top:722px;width:208px;height:32px;background:#fff;border:1px solid #e8eef1;"></div>
<div style="top:727.3px;line-height:23px;height:23px;font-size:18px;color:#151515;white-space:pre;letter-spacing:0.12px;left:618px;">None</div>
<svg style="left:801.5px;top:734.5px;" width="13" height="8" viewBox="0 0 13 8"><path d="M1 1L6.5 7L12 1" stroke="#4a4a4a" stroke-width="1.4" fill="none"/></svg>
<div style="left:614px;top:766px;width:100px;height:33.5px;background:#f6f8f9;border-radius:5px;border:1px solid #eef1f3;"></div>
<div style="top:772.05px;line-height:23px;height:23px;font-size:18px;color:#3b4a55;white-space:pre;letter-spacing:-0.43px;left:642.5px;">Edit...</div>
<div style="top:831.3px;line-height:23px;height:23px;font-size:18px;color:#151515;white-space:pre;letter-spacing:0.10px;left:441px;">Channels:</div>
<div style="left:437px;top:866px;width:21px;height:23.5px;border-radius:2.5px;border:1.3px solid #3f6577;background:linear-gradient(#7ba0b0,#4f7c8f);"></div>
<div style="top:868.8px;line-height:20px;height:20px;font-size:15px;color:#fff;white-space:pre;font-weight:bold;left:443.328px;">1</div>
<div style="left:459.5px;top:866px;width:21px;height:23.5px;border-radius:2.5px;border:1.3px solid #3f6577;background:linear-gradient(#7ba0b0,#4f7c8f);"></div>
<div style="top:868.8px;line-height:20px;height:20px;font-size:15px;color:#fff;white-space:pre;font-weight:bold;left:465.828px;">2</div>
<div style="left:435px;top:900px;width:539px;height:2.2px;background:linear-gradient(#dfe7ec,#9fb2bd);"></div>
<div style="left:443px;top:917px;width:3.5px;height:3.5px;background:#111;"></div>
<div style="top:906.3px;line-height:25px;height:25px;font-size:19.5px;color:#000;white-space:pre;font-weight:bold;letter-spacing:-0.29px;left:455px;">Analyzer</div>
<div style="top:943.3px;line-height:23px;height:23px;font-size:18px;color:#151515;white-space:pre;letter-spacing:-0.18px;left:470px;">High-pass Filter:</div>
<div style="left:615px;top:938px;width:206px;height:31.5px;background:#fff;border:1px solid #e8eef1;"></div>
<div style="top:943.05px;line-height:23px;height:23px;font-size:18px;color:#151515;white-space:pre;letter-spacing:-0.00px;left:620px;">Elliptic</div>
<svg style="left:801.5px;top:950.25px;" width="13" height="8" viewBox="0 0 13 8"><path d="M1 1L6.5 7L12 1" stroke="#4a4a4a" stroke-width="1.4" fill="none"/></svg>
<div style="left:831px;top:937px;width:121px;height:33px;background:#fff;border-bottom:1.5px solid #77838b;border-top:1px solid #e8eef1;"></div>
<div style="top:941.8px;line-height:23px;height:23px;font-size:18px;color:#151515;white-space:pre;letter-spacing:-0.60px;left:835px;">20 Hz</div>
<div style="top:984.3px;line-height:23px;height:23px;font-size:18px;color:#151515;white-space:pre;letter-spacing:-0.32px;left:476px;">Low-pass Filter:</div>
<div style="left:615px;top:979px;width:206px;height:31px;background:#fff;border:1px solid #e8eef1;"></div>
<div style="top:983.8px;line-height:23px;height:23px;font-size:18px;color:#151515;white-space:pre;letter-spacing:-0.42px;left:620px;">Signal Path</div>
<svg style="left:801.5px;top:991px;" width="13" height="8" viewBox="0 0 13 8"><path d="M1 1L6.5 7L12 1" stroke="#4a4a4a" stroke-width="1.4" fill="none"/></svg>
<div style="top:1026.3px;line-height:23px;height:23px;font-size:18px;color:#151515;white-space:pre;letter-spacing:0.13px;left:512px;">Weighting:</div>
<div style="left:615px;top:1021px;width:206px;height:31px;background:#fff;border:1px solid #e8eef1;"></div>
<div style="top:1025.8px;line-height:23px;height:23px;font-size:18px;color:#151515;white-space:pre;letter-spacing:-0.42px;left:620px;">Signal Path</div>
<svg style="left:801.5px;top:1033px;" width="13" height="8" viewBox="0 0 13 8"><path d="M1 1L6.5 7L12 1" stroke="#4a4a4a" stroke-width="1.4" fill="none"/></svg>
<div style="left:442.5px;top:1063.5px;width:510px;height:2.2px;background:linear-gradient(#dfe7ec,#9fb2bd);"></div>
<div style="top:1079.8px;line-height:23px;height:23px;font-size:18px;color:#151515;white-space:pre;letter-spacing:-0.56px;left:447px;">Phase Ref Channel:</div>
<div style="left:615px;top:1075px;width:71px;height:31px;background:#fff;border:1px solid #e8eef1;"></div>
<div style="top:1079.8px;line-height:23px;height:23px;font-size:18px;color:#151515;white-space:pre;letter-spacing:-1.01px;left:620px;">Ch1</div>
<svg style="left:666.5px;top:1087px;" width="13" height="8" viewBox="0 0 13 8"><path d="M1 1L6.5 7L12 1" stroke="#4a4a4a" stroke-width="1.4" fill="none"/></svg>
<div style="left:435px;top:1123px;width:539px;height:2.2px;background:linear-gradient(#dfe7ec,#9fb2bd);"></div>
<div style="left:439.5px;top:1133px;width:184.5px;height:31px;background:#fdfdfd;border-radius:5px;border:1px solid #eef1f3;"></div>
<div style="top:1137.8px;line-height:23px;height:23px;font-size:18px;color:#151515;white-space:pre;letter-spacing:-0.26px;left:451.75px;">Advanced Settings...</div>
<div style="left:978px;top:147px;width:1582px;height:38px;background:#dbe3e7;"></div>
<div style="left:978px;top:185px;width:1582px;height:940px;background:#fff;"></div>
<svg style="left:981px;top:152.7px;" width="24" height="24" viewBox="0 0 24 24"><rect width="24" height="24" fill="#2d4759"/><path d="M3 3H18L21 6V21H3Z" fill="#fff"/><rect x="8" y="3" width="8" height="6" fill="#2d4759"/><rect x="12.5" y="4" width="2.4" height="4" fill="#fff"/><rect x="6.5" y="12.5" width="11" height="8.5" fill="#2d4759"/><path d="M12 22L8 17.5H10.7V14H13.3V17.5H16Z" fill="#fff"/></svg>
<svg style="left:1008px;top:163.75px;" width="8" height="4.5" viewBox="0 0 8 4.5"><path d="M0 0H8L4.0 4.5Z" fill="#111"/></svg>
<svg style="left:1026px;top:152.7px;" width="24" height="24" viewBox="0 0 24 24"><rect width="24" height="24" fill="#2d4759"/><path d="M3 7H9V3H15L20 8V17H14V21H3Z" fill="#fff"/><path d="M9 3V13H14V21M15 3V8H20" stroke="#2d4759" stroke-width="1.3" fill="none"/></svg>
<svg style="left:1060.5px;top:152.7px;" width="24" height="24" viewBox="0 0 24 24"><rect width="24" height="24" fill="#2d4759"/><path d="M6 3H18V9H6Z" fill="#fff"/><path d="M2.5 9H21.5V18H18V15H6V18H2.5Z" fill="#fff"/><path d="M6 15H18V21.5H6Z" fill="#fff" stroke="#2d4759" stroke-width="1"/><path d="M7.5 5H16.5M7.5 7H16.5M8 17.5H16M8 19.5H16" stroke="#2d4759" stroke-width="0.8"/></svg>
<div style="left:1095.5px;top:152.7px;width:1.5px;height:24px;background:#f3f6f7;"></div>
<svg style="left:1104px;top:152.7px;" width="24" height="24" viewBox="0 0 24 24"><rect width="24" height="24" fill="#2d4759"/><circle cx="10" cy="10" r="6.2" stroke="#fff" stroke-width="1.8" fill="none"/><path d="M14.5 14.5L21.5 21.5" stroke="#fff" stroke-width="2.6"/><path d="M10 6.5V13.5M6.5 10H13.5" stroke="#fff" stroke-width="1.5"/></svg>
<svg style="left:1138.5px;top:152.7px;" width="24" height="24" viewBox="0 0 24 24"><rect width="24" height="24" fill="#2d4759"/><path d="M12 1L15.5 5.5H13.2V10.8H18.5V8.5L23 12L18.5 15.5V13.2H13.2V18.5H15.5L12 23L8.5 18.5H10.8V13.2H5.5V15.5L1 12L5.5 8.5V10.8H10.8V5.5H8.5Z" fill="#fff"/></svg>
<svg style="left:1173px;top:152.7px;" width="24" height="24" viewBox="0 0 24 24"><rect width="24" height="24" fill="#2d4759"/><g transform="rotate(0 12 12)"><path d="M3 3H9.5L7.3 5.2L10.8 8.7L8.7 10.8L5.2 7.3L3 9.5Z" fill="#fff"/></g><g transform="rotate(90 12 12)"><path d="M3 3H9.5L7.3 5.2L10.8 8.7L8.7 10.8L5.2 7.3L3 9.5Z" fill="#fff"/></g><g transform="rotate(180 12 12)"><path d="M3 3H9.5L7.3 5.2L10.8 8.7L8.7 10.8L5.2 7.3L3 9.5Z" fill="#fff"/></g><g transform="rotate(270 12 12)"><path d="M3 3H9.5L7.3 5.2L10.8 8.7L8.7 10.8L5.2 7.3L3 9.5Z" fill="#fff"/></g></svg>
<div style="left:1208.5px;top:152.7px;width:1.5px;height:24px;background:#f3f6f7;"></div>
<svg style="left:1217px;top:152.7px;" width="24" height="24" viewBox="0 0 24 24"><rect width="24" height="24" fill="#2d4759"/><path d="M12 1V8.5M12 15.5V23M1 12H4.5M6.5 12H9M15 12H17.5M19.5 12H23" stroke="#fff" stroke-width="2.4"/><circle cx="12" cy="12" r="2" stroke="#fff" stroke-width="1.2" fill="none"/></svg>
<div style="left:1252px;top:152.7px;width:1.5px;height:24px;background:#f3f6f7;"></div>
<svg style="left:1260px;top:152.7px;" width="24" height="24" viewBox="0 0 24 24"><rect width="24" height="24" fill="#2d4759"/><rect x="2.5" y="4" width="19" height="17" fill="none" stroke="#fff" stroke-width="1.4"/><rect x="2.5" y="4" width="19" height="3.2" fill="#fff"/><path d="M2.5 10.5H21.5M2.5 14H21.5M2.5 17.5H21.5M7.2 7V21M12 7V21M16.8 7V21" stroke="#fff" stroke-width="1"/></svg>
<svg style="left:1293px;top:152.7px;" width="24" height="24" viewBox="0 0 24 24"><rect width="24" height="24" fill="#2d4759"/><rect x="2" y="4.5" width="20" height="15" fill="#fff"/><path d="M2 17L9 10L13 14L22 7V19.5H2Z" fill="#5f8f9a"/><path d="M2 17L9 10L13 14L22 7" stroke="#2d4759" stroke-width="1.2" fill="none"/><path d="M2 2.2H22M2 21.8H22" stroke="#fff" stroke-width="1.2"/></svg>
<svg style="left:1320px;top:163.75px;" width="8" height="4.5" viewBox="0 0 8 4.5"><path d="M0 0H8L4.0 4.5Z" fill="#111"/></svg>
<svg style="left:1338px;top:152.7px;" width="24" height="24" viewBox="0 0 24 24"><rect width="24" height="24" fill="#2d4759"/><text x="3" y="18" font-size="18" font-style="italic" fill="#fff" font-family="Liberation Serif, serif">f</text><text x="12" y="20.5" font-size="13.5" font-weight="bold" fill="#fff" font-family="Liberation Sans, sans-serif">x</text></svg>
<svg style="left:1372.5px;top:152.7px;" width="24" height="24" viewBox="0 0 24 24"><rect width="24" height="24" fill="#2d4759"/><path d="M20.03 10.34 L20.03 13.66 L17.83 13.42 L17.13 15.11 L18.85 16.50 L16.50 18.85 L15.11 17.13 L13.42 17.83 L13.66 20.03 L10.34 20.03 L10.58 17.83 L8.89 17.13 L7.50 18.85 L5.15 16.50 L6.87 15.11 L6.17 13.42 L3.97 13.66 L3.97 10.34 L6.17 10.58 L6.87 8.89 L5.15 7.50 L7.50 5.15 L8.89 6.87 L10.58 6.17 L10.34 3.97 L13.66 3.97 L13.42 6.17 L15.11 6.87 L16.50 5.15 L18.85 7.50 L17.13 8.89 L17.83 10.58Z M14.60 12.00 A2.6 2.6 0 1 0 9.40 12.00 A2.6 2.6 0 1 0 14.60 12.00Z" fill="#fff" fill-rule="evenodd"/></svg>
<div style="left:1407.5px;top:152.7px;width:1.5px;height:24px;background:#f3f6f7;"></div>
<div style="top:153.8px;line-height:24px;height:24px;font-size:18.5px;color:#151515;white-space:pre;left:1416px;">X</div>
<div style="left:1437px;top:147px;width:78px;height:38px;background:#fff;"></div>
<div style="left:1497px;top:148px;width:17px;height:36px;background:#f7f7f7;"></div>
<div style="top:155.8px;line-height:24px;height:24px;font-size:18.5px;color:#151515;white-space:pre;left:1444px;">Hz</div>
<svg style="left:1501px;top:164.25px;" width="8" height="4.5" viewBox="0 0 8 4.5"><path d="M0 0H8L4.0 4.5Z" fill="#111"/></svg>
<div style="top:153.8px;line-height:24px;height:24px;font-size:18.5px;color:#151515;white-space:pre;left:1522px;">Y</div>
<div style="left:1540px;top:147px;width:77px;height:38px;background:#fff;"></div>
<div style="left:1599px;top:148px;width:17px;height:36px;background:#f7f7f7;"></div>
<div style="top:155.8px;line-height:24px;height:24px;font-size:18.5px;color:#151515;white-space:pre;left:1546px;">%</div>
<svg style="left:1603px;top:164.25px;" width="8" height="4.5" viewBox="0 0 8 4.5"><path d="M0 0H8L4.0 4.5Z" fill="#111"/></svg>
<svg style="left:2532px;top:155.5px;" width="20" height="19" viewBox="0 0 20 19"><path d="M8 3H2.5V16.5H16V11.5" stroke="#2b3f8c" stroke-width="2.4" fill="none"/><path d="M10.5 1.5H18V9L15.3 6.3L10 11.6L7.9 9.5L13.2 4.2Z" fill="#2b3f8c"/></svg>
<div style="top:184.3px;line-height:22px;height:22px;font-size:17px;color:#111;white-space:pre;font-family:'Liberation Serif',serif;letter-spacing:0.10px;left:1654.2px;">THD+N Ratio</div>
<div style="top:208.3px;line-height:23px;height:23px;font-size:18px;color:#151515;white-space:pre;letter-spacing:0.29px;left:2145.5px;">2025/7/9 11:46:21.573</div>
<svg style="left:1076px;top:233.5px;" width="1257" height="843.5" viewBox="0 0 1257 843.5"><path d="M126.1 0V843.5M199.9 0V843.5M228.0 0V843.5M252.3 0V843.5M273.7 0V843.5M545.1 0V843.5M618.9 0V843.5M647.0 0V843.5M671.3 0V843.5M692.7 0V843.5M964.1 0V843.5M1037.9 0V843.5M1066.0 0V843.5M1090.3 0V843.5M1111.7 0V843.5M0 11.7H1257M0 24.8H1257M0 39.6H1257M0 56.7H1257M0 101.7H1257M0 267.2H1257M0 280.3H1257M0 295.1H1257M0 312.2H1257M0 357.2H1257M0 522.7H1257M0 535.8H1257M0 550.6H1257M0 567.7H1257M0 612.7H1257M0 778.3H1257M0 791.3H1257M0 806.2H1257M0 823.3H1257" stroke="#e8e8e8" stroke-width="1" fill="none"/><path d="M73.8 0V843.5M166.7 0V843.5M292.9 0V843.5M419.0 0V843.5M492.8 0V843.5M585.7 0V843.5M711.9 0V843.5M838.0 0V843.5M911.8 0V843.5M1004.7 0V843.5M1130.9 0V843.5M0 76.9H1257M0 133.6H1257M0 178.6H1257M0 255.5H1257M0 332.4H1257M0 389.1H1257M0 434.1H1257M0 511.1H1257M0 588.0H1257M0 644.7H1257M0 689.7H1257M0 766.6H1257" stroke="#c0c0c0" stroke-width="1" fill="none"/><polyline points="0.0,793.5 41.9,795.1 83.8,793.9 125.7,792.0 167.6,793.5 209.5,795.8 251.4,792.5 293.3,793.5 335.2,795.1 377.1,798.5 419.0,798.5 460.9,790.8 502.8,790.1 544.7,792.5 586.6,792.5 628.5,795.1 670.4,794.5 712.3,789.8 754.2,794.1 796.1,795.1 838.0,793.5 879.9,778.5 921.8,781.5 963.7,778.5 1005.6,783.2 1047.5,786.8 1089.4,792.5 1131.3,785.8 1173.2,803.0 1215.1,804.5 1257.0,796.5" fill="none" stroke="#4558a0" stroke-width="1.1" stroke-linejoin="round"/><polyline points="0.0,787.0 41.9,789.0 83.8,791.0 125.7,791.5 167.6,792.5 209.5,793.0 251.4,790.8 293.3,792.5 335.2,791.7 377.1,789.1 419.0,793.5 460.9,789.1 502.8,784.8 544.7,791.5 586.6,791.8 628.5,791.5 670.4,792.5 712.3,789.1 754.2,790.1 796.1,791.8 838.0,792.5 879.9,778.2 921.8,779.9 963.7,776.9 1005.6,775.3 1047.5,778.5 1089.4,784.2 1131.3,788.5 1173.2,798.1 1215.1,793.5 1257.0,796.5" fill="none" stroke="#cc4558" stroke-width="1.1" stroke-linejoin="round"/><rect x="0" y="0" width="1257" height="843.5" fill="none" stroke="#6a6a6a" stroke-width="1.45"/></svg>
<div style="top:221.3px;line-height:23px;height:23px;font-size:18px;color:#151515;white-space:pre;letter-spacing:0.05px;left:1044.33px;">0.1</div>
<div style="top:298.221px;line-height:23px;height:23px;font-size:18px;color:#151515;white-space:pre;letter-spacing:0.05px;left:1034.26px;">0.05</div>
<div style="top:354.909px;line-height:23px;height:23px;font-size:18px;color:#151515;white-space:pre;letter-spacing:0.05px;left:1034.26px;">0.03</div>
<div style="top:399.905px;line-height:23px;height:23px;font-size:18px;color:#151515;white-space:pre;letter-spacing:0.05px;left:1034.26px;">0.02</div>
<div style="top:476.826px;line-height:23px;height:23px;font-size:18px;color:#151515;white-space:pre;letter-spacing:0.05px;left:1034.26px;">0.01</div>
<div style="top:553.747px;line-height:23px;height:23px;font-size:18px;color:#151515;white-space:pre;letter-spacing:0.05px;left:1024.2px;">0.005</div>
<div style="top:610.436px;line-height:23px;height:23px;font-size:18px;color:#151515;white-space:pre;letter-spacing:0.05px;left:1024.2px;">0.003</div>
<div style="top:655.432px;line-height:23px;height:23px;font-size:18px;color:#151515;white-space:pre;letter-spacing:0.05px;left:1024.2px;">0.002</div>
<div style="top:732.353px;line-height:23px;height:23px;font-size:18px;color:#151515;white-space:pre;letter-spacing:0.05px;left:1024.2px;">0.001</div>
<div style="top:809.274px;line-height:23px;height:23px;font-size:18px;color:#151515;white-space:pre;letter-spacing:0.05px;left:1014.14px;">0.0005</div>
<div style="top:865.962px;line-height:23px;height:23px;font-size:18px;color:#151515;white-space:pre;letter-spacing:0.05px;left:1014.14px;">0.0003</div>
<div style="top:910.958px;line-height:23px;height:23px;font-size:18px;color:#151515;white-space:pre;letter-spacing:0.05px;left:1014.14px;">0.0002</div>
<div style="top:987.879px;line-height:23px;height:23px;font-size:18px;color:#151515;white-space:pre;letter-spacing:0.05px;left:1014.14px;">0.0001</div>
<div style="top:1064.8px;line-height:23px;height:23px;font-size:18px;color:#151515;white-space:pre;letter-spacing:0.05px;left:1004.08px;">0.00005</div>
<div style="top:1081.1px;line-height:23px;height:23px;font-size:18px;color:#151515;white-space:pre;left:1064.79px;">20</div>
<div style="top:1081.1px;line-height:23px;height:23px;font-size:18px;color:#151515;white-space:pre;left:1138.57px;">30</div>
<div style="top:1081.1px;line-height:23px;height:23px;font-size:18px;color:#151515;white-space:pre;left:1231.53px;">50</div>
<div style="top:1081.1px;line-height:23px;height:23px;font-size:18px;color:#151515;white-space:pre;left:1352.65px;">100</div>
<div style="top:1081.1px;line-height:23px;height:23px;font-size:18px;color:#151515;white-space:pre;left:1478.78px;">200</div>
<div style="top:1081.1px;line-height:23px;height:23px;font-size:18px;color:#151515;white-space:pre;left:1552.56px;">300</div>
<div style="top:1081.1px;line-height:23px;height:23px;font-size:18px;color:#151515;white-space:pre;left:1645.52px;">500</div>
<div style="top:1081.1px;line-height:23px;height:23px;font-size:18px;color:#151515;white-space:pre;left:1777.16px;">1k</div>
<div style="top:1081.1px;line-height:23px;height:23px;font-size:18px;color:#151515;white-space:pre;left:1903.29px;">2k</div>
<div style="top:1081.1px;line-height:23px;height:23px;font-size:18px;color:#151515;white-space:pre;left:1977.08px;">3k</div>
<div style="top:1081.1px;line-height:23px;height:23px;font-size:18px;color:#151515;white-space:pre;left:2070.03px;">5k</div>
<div style="top:1081.1px;line-height:23px;height:23px;font-size:18px;color:#151515;white-space:pre;left:2191.16px;">10k</div>
<div style="top:1081.1px;line-height:23px;height:23px;font-size:18px;color:#151515;white-space:pre;left:2317.29px;">20k</div>
<div style="top:1099.7px;line-height:23px;height:23px;font-size:18px;color:#151515;white-space:pre;letter-spacing:-0.43px;left:1644.5px;">Frequency (Hz)</div>
<div style="left:916px;top:643px;width:150px;height:24px;line-height:24px;font-size:18px;color:#151515;text-align:center;white-space:nowrap;transform:rotate(-90deg);letter-spacing:-0.3px;">THD+N Ratio (%)</div>
<svg style="left:2281px;top:244px;" width="41" height="36" viewBox="0 0 41 36"><defs><linearGradient id="apg" x1="0" y1="0" x2="0.4" y2="1"><stop offset="0" stop-color="#7fb1dd"/><stop offset="0.45" stop-color="#1b66a8"/><stop offset="1" stop-color="#3f8fce"/></linearGradient></defs><path d="M11.9 1.6C30 2 40 10 39 19C38 29 22 36.5 6.6 34.7C20 34 33.5 28 34.5 18.5C35 10 26 3.5 11.9 1.6Z" fill="url(#apg)"/><text x="15.2" y="26" font-size="20.5" font-weight="bold" font-style="italic" fill="#17365f" text-anchor="middle" font-family="Liberation Sans, sans-serif" letter-spacing="-1.3">AP</text></svg>
<div style="left:2378.5px;top:233px;width:176.5px;height:96px;background:#fff;border:2.2px solid #161616;"></div>
<div style="left:2380.5px;top:235px;width:172.5px;height:30px;background:#2f7eb6;"></div>
<div style="top:236.8px;line-height:25px;height:25px;font-size:19px;color:#fff;white-space:pre;font-weight:bold;left:2433.41px;">Data</div>
<svg style="left:2533px;top:241px;" width="18" height="12" viewBox="0 0 18 12"><path d="M0.5 6H6" stroke="#dbe9f4" stroke-width="1.6"/><path d="M6 1V11" stroke="#dbe9f4" stroke-width="1.6"/><rect x="6.8" y="3" width="9.5" height="5.5" fill="none" stroke="#dbe9f4" stroke-width="1.5"/></svg>
<svg style="left:2383.8px;top:269.2px;" width="19.5" height="19.5" viewBox="0 0 19.5 19.5"><rect x="0.3" y="0.3" width="18.9" height="18.9" rx="4.5" fill="#0a5bb5"/><path d="M4.8 10L8.2 13.2L14.6 6.2" stroke="#fff" stroke-width="1.5" fill="none"/></svg>
<div style="left:2409.5px;top:270px;width:18.5px;height:18.5px;background:#13307c;"></div>
<div style="top:268.8px;line-height:23px;height:23px;font-size:18px;color:#151515;white-space:pre;left:2433.5px;">Ch1</div>
<svg style="left:2383.8px;top:300.2px;" width="19.5" height="19.5" viewBox="0 0 19.5 19.5"><rect x="0.3" y="0.3" width="18.9" height="18.9" rx="4.5" fill="#0a5bb5"/><path d="M4.8 10L8.2 13.2L14.6 6.2" stroke="#fff" stroke-width="1.5" fill="none"/></svg>
<div style="left:2409.5px;top:301px;width:18.5px;height:18.5px;background:#cb2222;"></div>
<div style="top:299.8px;line-height:23px;height:23px;font-size:18px;color:#151515;white-space:pre;left:2433.5px;">Ch2</div>
<div style="left:978px;top:1125px;width:1582px;height:37.5px;background:#dbe3e7;"></div>
<svg style="left:982.5px;top:1131.5px;" width="24" height="24" viewBox="0 0 24 24"><rect width="24" height="24" fill="#2d4759"/><rect x="5" y="4.5" width="3" height="15" fill="#fff"/><path d="M19 4.5V19.5L9 12Z" fill="#fff"/></svg>
<svg style="left:1017px;top:1131.5px;" width="24" height="24" viewBox="0 0 24 24"><rect width="24" height="24" fill="#2d4759"/><rect x="16" y="4.5" width="3" height="15" fill="#fff"/><path d="M5 4.5V19.5L15 12Z" fill="#fff"/></svg>
<div style="left:1051.5px;top:1131.5px;width:1.5px;height:24px;background:#f3f6f7;"></div>
<svg style="left:1059px;top:1131.5px;" width="24" height="24" viewBox="0 0 24 24"><rect width="24" height="24" fill="#2d4759"/><path d="M12 3.5V20.5M3.5 12H20.5" stroke="#fff" stroke-width="3"/></svg>
<div style="top:1131.3px;line-height:24px;height:24px;font-size:18.5px;color:#151515;white-space:pre;letter-spacing:0.36px;left:1088px;">Add</div>
<svg style="left:1133.5px;top:1141.25px;" width="8" height="4.5" viewBox="0 0 8 4.5"><path d="M0 0H8L4.0 4.5Z" fill="#111"/></svg>
<svg style="left:1150.5px;top:1131.5px;" width="24" height="24" viewBox="0 0 24 24"><rect width="24" height="24" fill="#2b4163"/><path d="M5 5L19 19M19 5L5 19" stroke="#fff" stroke-width="3.4"/></svg>
<div style="top:1131.3px;line-height:24px;height:24px;font-size:18.5px;color:#151515;white-space:pre;letter-spacing:0.09px;left:1180px;">Delete</div>
<svg style="left:1244.5px;top:1141.25px;" width="8" height="4.5" viewBox="0 0 8 4.5"><path d="M0 0H8L4.0 4.5Z" fill="#111"/></svg>
<svg style="left:1261.5px;top:1131.5px;" width="24" height="24" viewBox="0 0 24 24"><rect width="24" height="24" fill="#2d4759"/><path d="M5.5 21V5M2.5 8.5L5.5 4.5L8.5 8.5" stroke="#fff" stroke-width="1.6" fill="none"/><text x="15.5" y="10.5" font-size="10" font-weight="bold" fill="#fff" text-anchor="middle" font-family="Liberation Sans, sans-serif">9</text><text x="9.5" y="21" font-size="10" font-weight="bold" fill="#fff" text-anchor="middle" font-family="Liberation Sans, sans-serif">1</text><path d="M17.5 13V21M14.8 18L17.5 21.5L20.2 18" stroke="#fff" stroke-width="1.4" fill="none"/></svg>
<div style="top:1131.3px;line-height:24px;height:24px;font-size:18.5px;color:#151515;white-space:pre;letter-spacing:0.19px;left:1290.5px;">Sort By</div>
<svg style="left:1363px;top:1141.25px;" width="8" height="4.5" viewBox="0 0 8 4.5"><path d="M0 0H8L4.0 4.5Z" fill="#111"/></svg>
<svg style="left:1380px;top:1131.5px;" width="24" height="24" viewBox="0 0 24 24"><rect width="24" height="24" fill="#2d4759"/><path d="M20.03 10.34 L20.03 13.66 L17.83 13.42 L17.13 15.11 L18.85 16.50 L16.50 18.85 L15.11 17.13 L13.42 17.83 L13.66 20.03 L10.34 20.03 L10.58 17.83 L8.89 17.13 L7.50 18.85 L5.15 16.50 L6.87 15.11 L6.17 13.42 L3.97 13.66 L3.97 10.34 L6.17 10.58 L6.87 8.89 L5.15 7.50 L7.50 5.15 L8.89 6.87 L10.58 6.17 L10.34 3.97 L13.66 3.97 L13.42 6.17 L15.11 6.87 L16.50 5.15 L18.85 7.50 L17.13 8.89 L17.83 10.58Z M14.60 12.00 A2.6 2.6 0 1 0 9.40 12.00 A2.6 2.6 0 1 0 14.60 12.00Z" fill="#fff" fill-rule="evenodd"/></svg>
<div style="top:1131.3px;line-height:24px;height:24px;font-size:18.5px;color:#151515;white-space:pre;letter-spacing:0.06px;left:1409px;">Details</div>
<svg style="left:2530px;top:1135px;" width="21" height="17" viewBox="0 0 21 17"><path d="M7.5 0H13.5V4.5H17L10.5 10.5L4 4.5H7.5Z" fill="#2b477c"/><path d="M0.5 14.8H20.5" stroke="#2b477c" stroke-width="2.2"/></svg>
<div style="left:978px;top:1162.5px;width:1582px;height:121.5px;background:#fff;"></div>
<div style="left:978px;top:1284px;width:1582px;height:23px;background:#f0f0f0;"></div>
<div style="left:1587px;top:1293.5px;width:866px;height:3px;background:#6e6e6e;border-radius:2px;"></div>
<svg style="left:978px;top:1170px;overflow:hidden" width="25" height="80.5" viewBox="105 0 25 80.5"><rect x="1.2" y="1.2" width="127.6" height="78.1" fill="#fff" stroke="#b9c9d2" stroke-width="2.4"/><rect x="5" y="5" width="120" height="70.5" fill="#fff" stroke="#5e7b8e" stroke-width="1.5"/><path d="M26.3 10V69M36.6 10V69M46.9 10V69M57.2 10V69M67.5 10V69M77.8 10V69M88.1 10V69M98.4 10V69M108.7 10V69M16 17.4H119M16 24.8H119M16 32.1H119M16 39.5H119M16 46.9H119M16 54.2H119M16 61.6H119" stroke="#f3f3f3" stroke-width="0.7" fill="none"/><rect x="16" y="10" width="103" height="59" fill="none" stroke="#e6e6e6" stroke-width="0.7"/><path d="M16 37.1H119" stroke="#ecb5bc" stroke-width="0.8" fill="none"/><ellipse cx="115" cy="14.5" rx="2.4" ry="1.8" fill="#bcd3ea"/><path d="M95 7H117" stroke="#dcdcdc" stroke-width="0.9"/><path d="M22 73H115" stroke="#e2e2e2" stroke-width="1.2" stroke-dasharray="3 9"/><path d="M12 14V65" stroke="#e2e2e2" stroke-width="1.2" stroke-dasharray="2 6"/></svg>
<svg style="left:1059px;top:1170px;" width="130" height="80.5" viewBox="0 0 130 80.5"><rect x="1.5" y="1.5" width="127" height="77.5" fill="#fff" stroke="#4d6b81" stroke-width="3"/><rect x="5.5" y="5.5" width="119" height="69.5" fill="#fff" stroke="#4d6b81" stroke-width="1.3"/><path d="M26.3 10V69M36.6 10V69M46.9 10V69M57.2 10V69M67.5 10V69M77.8 10V69M88.1 10V69M98.4 10V69M108.7 10V69M16 17.4H119M16 24.8H119M16 32.1H119M16 39.5H119M16 46.9H119M16 54.2H119M16 61.6H119" stroke="#f3f3f3" stroke-width="0.7" fill="none"/><rect x="16" y="10" width="103" height="59" fill="none" stroke="#e6e6e6" stroke-width="0.7"/><path d="M16 63L78 64L119 63" stroke="#ecb5bc" stroke-width="0.8" fill="none"/><ellipse cx="115" cy="14.5" rx="2.4" ry="1.8" fill="#bcd3ea"/><path d="M95 7H117" stroke="#dcdcdc" stroke-width="0.9"/><path d="M22 73H115" stroke="#e2e2e2" stroke-width="1.2" stroke-dasharray="3 9"/><path d="M12 14V65" stroke="#e2e2e2" stroke-width="1.2" stroke-dasharray="2 6"/></svg>
<div style="left:1035px;top:1250.5px;width:178.5px;height:25px;background:#4d6b81;"></div>
<div style="top:1252.8px;line-height:23px;height:23px;font-size:18px;color:#fff;white-space:pre;letter-spacing:-0.30px;left:1071.88px;">THD+N Ratio</div>
<svg style="left:1245px;top:1170px;" width="130" height="80.5" viewBox="0 0 130 80.5"><rect x="1.2" y="1.2" width="127.6" height="78.1" fill="#fff" stroke="#b9c9d2" stroke-width="2.4"/><rect x="5" y="5" width="120" height="70.5" fill="#fff" stroke="#5e7b8e" stroke-width="1.5"/><path d="M26.3 10V69M36.6 10V69M46.9 10V69M57.2 10V69M67.5 10V69M77.8 10V69M88.1 10V69M98.4 10V69M108.7 10V69M16 17.4H119M16 24.8H119M16 32.1H119M16 39.5H119M16 46.9H119M16 54.2H119M16 61.6H119" stroke="#f3f3f3" stroke-width="0.7" fill="none"/><rect x="16" y="10" width="103" height="59" fill="none" stroke="#e6e6e6" stroke-width="0.7"/><path d="M16 63L78 64L119 63" stroke="#ecb5bc" stroke-width="0.8" fill="none"/><ellipse cx="115" cy="14.5" rx="2.4" ry="1.8" fill="#bcd3ea"/><path d="M95 7H117" stroke="#dcdcdc" stroke-width="0.9"/><path d="M22 73H115" stroke="#e2e2e2" stroke-width="1.2" stroke-dasharray="3 9"/><path d="M12 14V65" stroke="#e2e2e2" stroke-width="1.2" stroke-dasharray="2 6"/></svg>
<div style="top:1252.8px;line-height:23px;height:23px;font-size:18px;color:#151515;white-space:pre;letter-spacing:-0.30px;left:1257.38px;">THD+N Level</div>
<svg style="left:1431px;top:1170px;" width="130" height="80.5" viewBox="0 0 130 80.5"><rect x="1.2" y="1.2" width="127.6" height="78.1" fill="#fff" stroke="#b9c9d2" stroke-width="2.4"/><rect x="5" y="5" width="120" height="70.5" fill="#fff" stroke="#5e7b8e" stroke-width="1.5"/><path d="M26.3 10V69M36.6 10V69M46.9 10V69M57.2 10V69M67.5 10V69M77.8 10V69M88.1 10V69M98.4 10V69M108.7 10V69M16 17.4H119M16 24.8H119M16 32.1H119M16 39.5H119M16 46.9H119M16 54.2H119M16 61.6H119" stroke="#f3f3f3" stroke-width="0.7" fill="none"/><rect x="16" y="10" width="103" height="59" fill="none" stroke="#e6e6e6" stroke-width="0.7"/><path d="M16 55L57 53L104 56L105 67" stroke="#ecb5bc" stroke-width="0.8" fill="none"/><ellipse cx="115" cy="14.5" rx="2.4" ry="1.8" fill="#bcd3ea"/><path d="M95 7H117" stroke="#dcdcdc" stroke-width="0.9"/><path d="M22 73H115" stroke="#e2e2e2" stroke-width="1.2" stroke-dasharray="3 9"/><path d="M12 14V65" stroke="#e2e2e2" stroke-width="1.2" stroke-dasharray="2 6"/></svg>
<div style="top:1252.8px;line-height:23px;height:23px;font-size:18px;color:#151515;white-space:pre;letter-spacing:-0.30px;left:1455.34px;">THD Ratio</div>
<svg style="left:1617px;top:1170px;" width="130" height="80.5" viewBox="0 0 130 80.5"><rect x="1.2" y="1.2" width="127.6" height="78.1" fill="#fff" stroke="#b9c9d2" stroke-width="2.4"/><rect x="5" y="5" width="120" height="70.5" fill="#fff" stroke="#5e7b8e" stroke-width="1.5"/><path d="M26.3 10V69M36.6 10V69M46.9 10V69M57.2 10V69M67.5 10V69M77.8 10V69M88.1 10V69M98.4 10V69M108.7 10V69M16 17.4H119M16 24.8H119M16 32.1H119M16 39.5H119M16 46.9H119M16 54.2H119M16 61.6H119" stroke="#f3f3f3" stroke-width="0.7" fill="none"/><rect x="16" y="10" width="103" height="59" fill="none" stroke="#e6e6e6" stroke-width="0.7"/><path d="M16 62L36 60L56 62L86 59L104 57L105 67" stroke="#ecb5bc" stroke-width="0.8" fill="none"/><ellipse cx="115" cy="14.5" rx="2.4" ry="1.8" fill="#bcd3ea"/><path d="M95 7H117" stroke="#dcdcdc" stroke-width="0.9"/><path d="M22 73H115" stroke="#e2e2e2" stroke-width="1.2" stroke-dasharray="3 9"/><path d="M12 14V65" stroke="#e2e2e2" stroke-width="1.2" stroke-dasharray="2 6"/></svg>
<div style="top:1252.8px;line-height:23px;height:23px;font-size:18px;color:#151515;white-space:pre;letter-spacing:-0.30px;left:1640.83px;">THD Level</div>
<svg style="left:1803px;top:1170px;" width="130" height="80.5" viewBox="0 0 130 80.5"><rect x="1.2" y="1.2" width="127.6" height="78.1" fill="#fff" stroke="#b9c9d2" stroke-width="2.4"/><rect x="5" y="5" width="120" height="70.5" fill="#fff" stroke="#5e7b8e" stroke-width="1.5"/><path d="M26.3 10V69M36.6 10V69M46.9 10V69M57.2 10V69M67.5 10V69M77.8 10V69M88.1 10V69M98.4 10V69M108.7 10V69M16 17.4H119M16 24.8H119M16 32.1H119M16 39.5H119M16 46.9H119M16 54.2H119M16 61.6H119" stroke="#f3f3f3" stroke-width="0.7" fill="none"/><rect x="16" y="10" width="103" height="59" fill="none" stroke="#e6e6e6" stroke-width="0.7"/><path d="M16 62L36 60L56 62L86 59L104 57L105 67" stroke="#ecb5bc" stroke-width="0.8" fill="none"/><ellipse cx="115" cy="14.5" rx="2.4" ry="1.8" fill="#bcd3ea"/><path d="M95 7H117" stroke="#dcdcdc" stroke-width="0.9"/><path d="M22 73H115" stroke="#e2e2e2" stroke-width="1.2" stroke-dasharray="3 9"/><path d="M12 14V65" stroke="#e2e2e2" stroke-width="1.2" stroke-dasharray="2 6"/></svg>
<div style="top:1252.8px;line-height:23px;height:23px;font-size:18px;color:#151515;white-space:pre;letter-spacing:-0.09px;left:1787.5px;">Distortion  Product...</div>
<svg style="left:1989px;top:1170px;" width="130" height="80.5" viewBox="0 0 130 80.5"><rect x="1.2" y="1.2" width="127.6" height="78.1" fill="#fff" stroke="#b9c9d2" stroke-width="2.4"/><rect x="5" y="5" width="120" height="70.5" fill="#fff" stroke="#5e7b8e" stroke-width="1.5"/><path d="M26.3 10V69M36.6 10V69M46.9 10V69M57.2 10V69M67.5 10V69M77.8 10V69M88.1 10V69M98.4 10V69M108.7 10V69M16 17.4H119M16 24.8H119M16 32.1H119M16 39.5H119M16 46.9H119M16 54.2H119M16 61.6H119" stroke="#f3f3f3" stroke-width="0.7" fill="none"/><rect x="16" y="10" width="103" height="59" fill="none" stroke="#e6e6e6" stroke-width="0.7"/><path d="M16 62L36 60L56 62L86 59L104 57L105 67" stroke="#ecb5bc" stroke-width="0.8" fill="none"/><ellipse cx="115" cy="14.5" rx="2.4" ry="1.8" fill="#bcd3ea"/><path d="M95 7H117" stroke="#dcdcdc" stroke-width="0.9"/><path d="M22 73H115" stroke="#e2e2e2" stroke-width="1.2" stroke-dasharray="3 9"/><path d="M12 14V65" stroke="#e2e2e2" stroke-width="1.2" stroke-dasharray="2 6"/></svg>
<div style="top:1252.8px;line-height:23px;height:23px;font-size:18px;color:#151515;white-space:pre;letter-spacing:-0.09px;left:1973.5px;">Distortion  Product...</div>
<svg style="left:2175px;top:1170px;" width="130" height="80.5" viewBox="0 0 130 80.5"><rect x="1.2" y="1.2" width="127.6" height="78.1" fill="#fff" stroke="#b9c9d2" stroke-width="2.4"/><rect x="5" y="5" width="120" height="70.5" fill="#fff" stroke="#5e7b8e" stroke-width="1.5"/><path d="M26.3 10V69M36.6 10V69M46.9 10V69M57.2 10V69M67.5 10V69M77.8 10V69M88.1 10V69M98.4 10V69M108.7 10V69M16 17.4H119M16 24.8H119M16 32.1H119M16 39.5H119M16 46.9H119M16 54.2H119M16 61.6H119" stroke="#f3f3f3" stroke-width="0.7" fill="none"/><rect x="16" y="10" width="103" height="59" fill="none" stroke="#e6e6e6" stroke-width="0.7"/><path d="M16 15L88 15L93 18L119 16" stroke="#ecb5bc" stroke-width="0.8" fill="none"/><ellipse cx="115" cy="14.5" rx="2.4" ry="1.8" fill="#bcd3ea"/><path d="M95 7H117" stroke="#dcdcdc" stroke-width="0.9"/><path d="M22 73H115" stroke="#e2e2e2" stroke-width="1.2" stroke-dasharray="3 9"/><path d="M12 14V65" stroke="#e2e2e2" stroke-width="1.2" stroke-dasharray="2 6"/></svg>
<div style="top:1252.8px;line-height:23px;height:23px;font-size:18px;color:#151515;white-space:pre;letter-spacing:-0.30px;left:2213.24px;">SINAD</div>
<svg style="left:2361px;top:1170px;" width="130" height="80.5" viewBox="0 0 130 80.5"><rect x="1.2" y="1.2" width="127.6" height="78.1" fill="#fff" stroke="#b9c9d2" stroke-width="2.4"/><rect x="5" y="5" width="120" height="70.5" fill="#fff" stroke="#5e7b8e" stroke-width="1.5"/><path d="M26.3 10V69M36.6 10V69M46.9 10V69M57.2 10V69M67.5 10V69M77.8 10V69M88.1 10V69M98.4 10V69M108.7 10V69M16 17.4H119M16 24.8H119M16 32.1H119M16 39.5H119M16 46.9H119M16 54.2H119M16 61.6H119" stroke="#f3f3f3" stroke-width="0.7" fill="none"/><rect x="16" y="10" width="103" height="59" fill="none" stroke="#e6e6e6" stroke-width="0.7"/><path d="M16 57L119 57" stroke="#ecb5bc" stroke-width="0.8" fill="none"/><ellipse cx="115" cy="14.5" rx="2.4" ry="1.8" fill="#bcd3ea"/><path d="M95 7H117" stroke="#dcdcdc" stroke-width="0.9"/><path d="M22 73H115" stroke="#e2e2e2" stroke-width="1.2" stroke-dasharray="3 9"/><path d="M12 14V65" stroke="#e2e2e2" stroke-width="1.2" stroke-dasharray="2 6"/></svg>
<div style="top:1252.8px;line-height:23px;height:23px;font-size:18px;color:#151515;white-space:pre;letter-spacing:-0.30px;left:2380.62px;">Noise Level</div>
<svg style="left:2547px;top:1170px;overflow:hidden" width="11" height="80.5" viewBox="0 0 11 80.5"><rect x="1.2" y="1.2" width="127.6" height="78.1" fill="#fff" stroke="#b9c9d2" stroke-width="2.4"/><rect x="5" y="5" width="120" height="70.5" fill="#fff" stroke="#5e7b8e" stroke-width="1.5"/><path d="M26.3 10V69M36.6 10V69M46.9 10V69M57.2 10V69M67.5 10V69M77.8 10V69M88.1 10V69M98.4 10V69M108.7 10V69M16 17.4H119M16 24.8H119M16 32.1H119M16 39.5H119M16 46.9H119M16 54.2H119M16 61.6H119" stroke="#f3f3f3" stroke-width="0.7" fill="none"/><rect x="16" y="10" width="103" height="59" fill="none" stroke="#e6e6e6" stroke-width="0.7"/><path d="M16 63L78 64L119 63" stroke="#ecb5bc" stroke-width="0.8" fill="none"/><ellipse cx="115" cy="14.5" rx="2.4" ry="1.8" fill="#bcd3ea"/><path d="M95 7H117" stroke="#dcdcdc" stroke-width="0.9"/><path d="M22 73H115" stroke="#e2e2e2" stroke-width="1.2" stroke-dasharray="3 9"/><path d="M12 14V65" stroke="#e2e2e2" stroke-width="1.2" stroke-dasharray="2 6"/></svg>
<div style="left:978px;top:1307px;width:1582px;height:10px;background:#4d6b81;"></div>
<div style="left:1757.5px;top:1310.3px;width:3.5px;height:3.5px;background:#a9bccb;border-radius:2px;"></div>
<div style="left:1766px;top:1310.3px;width:3.5px;height:3.5px;background:#a9bccb;border-radius:2px;"></div>
<div style="left:1774.5px;top:1310.3px;width:3.5px;height:3.5px;background:#a9bccb;border-radius:2px;"></div>
<div style="left:978px;top:1317px;width:1582px;height:39px;background:#dbe3e7;"></div>
<div style="left:978px;top:1355px;width:1582px;height:1.5px;background:#c9d2d7;"></div>
<div style="top:1324.3px;line-height:24px;height:24px;font-size:18.5px;color:#151515;white-space:pre;letter-spacing:-0.03px;left:983px;">Data Sets</div>
<div style="left:1077.5px;top:1323px;width:1.5px;height:25px;background:#f3f6f7;"></div>
<svg style="left:1086px;top:1323.5px;" width="24" height="24" viewBox="0 0 24 24"><rect x="2.5" y="3" width="18.5" height="18.5" rx="2.5" fill="#3b5f80"/><path d="M6.5 12.5L10.3 16.3L17.3 8" stroke="#fff" stroke-width="2.5" fill="none"/></svg>
<svg style="left:1120.5px;top:1323.5px;" width="24" height="24" viewBox="0 0 24 24"><rect x="3.7" y="4.2" width="16.2" height="16.2" rx="2" fill="#fff" stroke="#3b5f80" stroke-width="2.4"/></svg>
<div style="left:1155px;top:1323px;width:1.5px;height:25px;background:#f3f6f7;"></div>
<svg style="left:1162px;top:1323.5px;" width="24" height="24" viewBox="0 0 24 24"><rect width="24" height="24" fill="#2d4759"/><rect x="2" y="3" width="20" height="3.4" fill="#fff"/><rect x="2" y="3" width="20" height="17" fill="none" stroke="#fff" stroke-width="1.3"/><path d="M2 10H22M2 13.5H22M2 17H22M7 6V20M12 6V20M17 6V20" stroke="#fff" stroke-width="1"/><rect x="12" y="12" width="12" height="12" fill="#2d4759"/><path d="M14 14.5L21.5 22M21.5 14.5L14 22" stroke="#fff" stroke-width="2.2"/></svg>
<div style="top:1324.3px;line-height:24px;height:24px;font-size:18.5px;color:#151515;white-space:pre;letter-spacing:0.16px;left:1191.5px;">Clear Data</div>
<svg style="left:1292px;top:1334.25px;" width="8" height="4.5" viewBox="0 0 8 4.5"><path d="M0 0H8L4.0 4.5Z" fill="#111"/></svg>
<svg style="left:1309.5px;top:1323.5px;" width="24" height="24" viewBox="0 0 24 24"><rect width="24" height="24" fill="#2d4759"/><rect x="2" y="3" width="20" height="3.4" fill="#fff"/><rect x="2" y="3" width="20" height="17" fill="none" stroke="#fff" stroke-width="1.3"/><path d="M2 10H22M2 13.5H22M2 17H22M7 6V20M12 6V20M17 6V20" stroke="#fff" stroke-width="1"/><rect x="0" y="12" width="12" height="12" fill="#2d4759"/><path d="M1 16.7H6V13.5L11 18L6 22.5V19.3H1Z" fill="#fff"/></svg>
<div style="top:1324.3px;line-height:24px;height:24px;font-size:18.5px;color:#151515;white-space:pre;letter-spacing:1.18px;left:1338.5px;">Import</div>
<svg style="left:1411px;top:1323.5px;" width="24" height="24" viewBox="0 0 24 24"><rect width="24" height="24" fill="#2d4759"/><rect x="2" y="3" width="20" height="3.4" fill="#fff"/><rect x="2" y="3" width="20" height="17" fill="none" stroke="#fff" stroke-width="1.3"/><path d="M2 10H22M2 13.5H22M2 17H22M7 6V20M12 6V20M17 6V20" stroke="#fff" stroke-width="1"/><rect x="12" y="12" width="12" height="12" fill="#2d4759"/><path d="M13 16.7H18V13.5L23 18L18 22.5V19.3H13Z" fill="#fff"/></svg>
<div style="top:1324.3px;line-height:24px;height:24px;font-size:18.5px;color:#151515;white-space:pre;letter-spacing:0.59px;left:1440px;">Export</div>
<svg style="left:1510px;top:1323.5px;" width="24" height="24" viewBox="0 0 24 24"><rect width="24" height="24" fill="#2d4759"/><path d="M20.03 10.34 L20.03 13.66 L17.83 13.42 L17.13 15.11 L18.85 16.50 L16.50 18.85 L15.11 17.13 L13.42 17.83 L13.66 20.03 L10.34 20.03 L10.58 17.83 L8.89 17.13 L7.50 18.85 L5.15 16.50 L6.87 15.11 L6.17 13.42 L3.97 13.66 L3.97 10.34 L6.17 10.58 L6.87 8.89 L5.15 7.50 L7.50 5.15 L8.89 6.87 L10.58 6.17 L10.34 3.97 L13.66 3.97 L13.42 6.17 L15.11 6.87 L16.50 5.15 L18.85 7.50 L17.13 8.89 L17.83 10.58Z M14.60 12.00 A2.6 2.6 0 1 0 9.40 12.00 A2.6 2.6 0 1 0 14.60 12.00Z" fill="#fff" fill-rule="evenodd"/></svg>
<div style="top:1324.3px;line-height:24px;height:24px;font-size:18.5px;color:#151515;white-space:pre;letter-spacing:0.30px;left:1539px;">Data Settings</div>
<svg style="left:2530px;top:1327px;" width="21" height="17" viewBox="0 0 21 17"><path d="M7.5 0H13.5V4.5H17L10.5 10.5L4 4.5H7.5Z" fill="#2b477c"/><path d="M0.5 14.8H20.5" stroke="#2b477c" stroke-width="2.2"/></svg>
<div style="left:978px;top:1356.5px;width:1582px;height:140.5px;background:#f0f0f0;"></div>
<div style="left:978px;top:1391px;width:1531px;height:34.5px;background:#fff;border-top:1.3px solid #9a9a9a;border-bottom:1px solid #dcdcdc;"></div>
<div style="left:1012.3px;top:1358px;width:1.4px;height:67.5px;background:#a0a0a0;"></div>
<div style="left:1138.3px;top:1358px;width:1.4px;height:67.5px;background:#a0a0a0;"></div>
<div style="left:1328.8px;top:1358px;width:1.4px;height:67.5px;background:#a0a0a0;"></div>
<div style="left:2507.8px;top:1358px;width:1.4px;height:67.5px;background:#a8a8a8;"></div>
<div style="top:1366.3px;line-height:23px;height:23px;font-size:18px;color:#151515;white-space:pre;letter-spacing:-0.76px;left:1044.5px;">Data Set</div>
<div style="top:1366.3px;line-height:23px;height:23px;font-size:18px;color:#151515;white-space:pre;letter-spacing:-0.58px;left:1217px;">Time</div>
<div style="top:1366.3px;line-height:23px;height:23px;font-size:18px;color:#151515;white-space:pre;letter-spacing:-0.20px;left:1895.5px;">Notes</div>
<svg style="left:980.5px;top:1396px;" width="20" height="20" viewBox="0 0 20 20"><rect x="1" y="1" width="18" height="18" fill="#f4f4f4" stroke="#8c8c8c" stroke-width="1.6"/><path d="M4.5 10L8 14L15.5 4.5" stroke="#9a9a9a" stroke-width="2" fill="none"/></svg>
<div style="top:1395.3px;line-height:23px;height:23px;font-size:18px;color:#151515;white-space:pre;letter-spacing:-0.51px;left:1018px;">Measured 1</div>
<div style="top:1395.3px;line-height:23px;height:23px;font-size:18px;color:#151515;white-space:pre;letter-spacing:0.42px;left:1143.5px;">2025/7/9 11:46:21</div>
<div style="left:0px;top:1497px;width:2560px;height:32px;background:#f0f0f0;border-top:1px solid #d6d6d6;"></div>
<div style="top:1501.8px;line-height:25px;height:25px;font-size:19.5px;color:#151515;white-space:pre;letter-spacing:0.01px;left:1308px;">Output:</div>
<div style="left:1384px;top:1500.5px;width:281px;height:25.5px;background:#000;"></div>
<div style="top:1501.8px;line-height:25px;height:25px;font-size:19.5px;color:#22dc22;white-space:pre;letter-spacing:-0.10px;left:1389.5px;-webkit-text-stroke:0.3px #22dc22;">Analog Balanced 2 Ch, 40 ohm</div>
<div style="top:1501.8px;line-height:25px;height:25px;font-size:19.5px;color:#151515;white-space:pre;letter-spacing:0.06px;left:1674.5px;">Input 1:</div>
<div style="left:1751px;top:1500.5px;width:302px;height:25.5px;background:#000;"></div>
<div style="top:1501.8px;line-height:25px;height:25px;font-size:19.5px;color:#22dc22;white-space:pre;letter-spacing:-0.05px;left:1756.5px;-webkit-text-stroke:0.3px #22dc22;">Analog Balanced 2 Ch, 200 kohm</div>
<div style="left:2058px;top:1500.5px;width:126px;height:25.5px;background:#000;"></div>
<div style="top:1501.8px;line-height:25px;height:25px;font-size:19.5px;color:#22dc22;white-space:pre;letter-spacing:-0.20px;left:2063.5px;-webkit-text-stroke:0.3px #22dc22;">310.0 mVrms</div>
<div style="left:2189px;top:1500.5px;width:196px;height:25.5px;background:#000;"></div>
<div style="top:1501.8px;line-height:25px;height:25px;font-size:19.5px;color:#22dc22;white-space:pre;letter-spacing:-0.09px;left:2194.5px;-webkit-text-stroke:0.3px #22dc22;">AC (&lt;10 Hz) - 20 kHz</div>
<div style="top:1501.8px;line-height:25px;height:25px;font-size:19.5px;color:#333;white-space:pre;letter-spacing:-0.07px;left:2394.5px;">Input 2:</div>
<div style="left:2472px;top:1500.5px;width:60px;height:25.5px;background:#000;"></div>
<div style="top:1501.8px;line-height:25px;height:25px;font-size:19.5px;color:#22dc22;white-space:pre;letter-spacing:0.10px;left:2477.5px;-webkit-text-stroke:0.3px #22dc22;">None</div>
<div style="left:2558.6px;top:35px;width:1.4px;height:1462px;background:#fafafa;"></div>
<div style="left:2296px;top:1462.5px;width:263px;height:38px;background:#fff;border:1px solid #d5deec;border-radius:5px 2px 2px 5px;box-shadow:0 1px 3px rgba(0,0,0,.14);"></div>
<svg style="left:2256px;top:1455px;" width="50" height="47" viewBox="0 0 50 47"><defs><linearGradient id="sg" x1="0" y1="0" x2="0" y2="1"><stop offset="0" stop-color="#f57a3f"/><stop offset="1" stop-color="#ee551c"/></linearGradient></defs><path d="M2.5 13Q1.5 8.5 6 7.3L34 0.8Q38.8 -0.2 40 4.5L48 35Q49 39.8 44.5 41L17 46.4Q12 47.3 10.8 42.5Z" fill="url(#sg)"/><text x="25" y="39.5" font-size="44" font-weight="bold" font-style="italic" fill="#fff" text-anchor="middle" font-family="Liberation Sans, sans-serif" transform="rotate(-12 25 24) translate(25 0) scale(1.22 0.92) translate(-25 2)">S</text></svg>
<div style="top:1468.8px;line-height:27px;height:27px;font-size:21px;color:#1768d6;white-space:pre;font-weight:bold;left:2315px;-webkit-text-stroke:0.6px #1768d6;">中</div>
<svg style="left:2352px;top:1470px;" width="24" height="24" viewBox="0 0 24 24"><circle cx="5" cy="7.5" r="2.7" fill="none" stroke="#1768d6" stroke-width="2.2"/><path d="M15.5 14Q19.5 14.5 18 19Q17 21.5 14.5 22.5" stroke="#1768d6" stroke-width="3" fill="none"/><circle cx="16.3" cy="14.8" r="2.6" fill="#1768d6"/></svg>
<svg style="left:2387px;top:1468px;" width="20" height="27" viewBox="0 0 20 27"><rect x="5.2" y="1.5" width="9.6" height="16" rx="4.8" fill="#1768d6"/><path d="M1.8 12A8.2 8.2 0 0 0 18.2 12" stroke="#1768d6" stroke-width="2.4" fill="none"/><path d="M10 20V23.5" stroke="#1768d6" stroke-width="2.4"/><path d="M6.5 24.6H13.5" stroke="#1768d6" stroke-width="2.6" stroke-linecap="round"/></svg>
<svg style="left:2422px;top:1472px;" width="24" height="19" viewBox="0 0 24 19"><rect x="0.5" y="0.5" width="23" height="18" rx="3" fill="#1768d6"/><path d="M3.5 5H20.5M3.5 9H20.5" stroke="#fff" stroke-width="2" stroke-dasharray="2.5 1.1"/><path d="M6.5 13.6H17.5" stroke="#fff" stroke-width="2.2"/></svg>
<svg style="left:2457px;top:1465px;" width="30" height="30" viewBox="0 0 30 30"><defs><linearGradient id="shirt" x1="0.2" y1="0" x2="0.8" y2="1"><stop offset="0" stop-color="#f0584e"/><stop offset="0.55" stop-color="#a55ae8"/><stop offset="1" stop-color="#5ec8ff"/></linearGradient></defs><path d="M2.5 10L9.5 7Q13.5 10.5 17.5 7L24.5 10L22.5 16.5L19.5 15.3V26H7.5V15.3L4.5 16.5Z" fill="url(#shirt)" stroke="url(#shirt)" stroke-width="1.2" stroke-linejoin="round"/><circle cx="24.5" cy="4.3" r="3.8" fill="#f4502e"/></svg>
<svg style="left:2496px;top:1471px;" width="21" height="21" viewBox="0 0 21 21"><rect x="0.5" y="0.5" width="9" height="9" rx="2.6" fill="#1768d6"/><rect x="11.5" y="0.5" width="9" height="9" rx="2.6" fill="#1768d6"/><circle cx="16" cy="5" r="1.7" fill="#fff"/><rect x="0.5" y="11.5" width="9" height="9" rx="2.6" fill="#1768d6"/><rect x="11.5" y="11.5" width="9" height="9" rx="2.6" fill="#1768d6"/></svg>
<svg style="left:2530px;top:1469px;" width="24" height="24" viewBox="0 0 24 24"><path d="M12 0.8L15.2 5.2L20.8 4.8L19.8 10.3L23.2 14.5L18.2 16.8L17 22.3L12 19.8L7 22.3L5.8 16.8L0.8 14.5L4.2 10.3L3.2 4.8L8.8 5.2Z" fill="#1768d6" stroke="#1768d6" stroke-width="1.5" stroke-linejoin="round"/><path d="M12 7.5A3.6 3.6 0 0 1 13.6 14.3V19H10.4V14.3A3.6 3.6 0 0 1 12 7.5Z" fill="#fff"/></svg>
<div style="left:0px;top:1529px;width:2560px;height:71px;background:linear-gradient(90deg,#d7e9e1 0%,#dcebe5 35%,#d9e9e3 70%,#daebe6 100%);border-top:1.5px solid #a7b8b2;"></div>
<svg style="left:30px;top:1546px;" width="36" height="37" viewBox="0 0 36 37"><defs><linearGradient id="sun" x1="0" y1="0" x2="0" y2="1"><stop offset="0" stop-color="#f8b31c"/><stop offset="1" stop-color="#f0812a"/></linearGradient><linearGradient id="cl" x1="0" y1="0" x2="0" y2="1"><stop offset="0" stop-color="#f2f6fc"/><stop offset="1" stop-color="#b4c8ec"/></linearGradient></defs><circle cx="16" cy="16" r="14.5" fill="url(#sun)"/><path d="M9 35A7 7 0 0 1 9.5 21.5A9 9 0 0 1 26 20A7.5 7.5 0 0 1 28 35Z" fill="url(#cl)"/></svg>
<div style="top:1541.3px;line-height:23px;height:23px;font-size:18px;color:#111;white-space:pre;letter-spacing:-0.50px;left:76.5px;">32°C</div>
<div style="top:1565.8px;line-height:23px;height:23px;font-size:18px;color:#484848;white-space:pre;letter-spacing:-0.20px;left:76.5px;">局部晴朗</div>
<svg style="left:1064px;top:1546.5px;" width="36" height="36" viewBox="0 0 36 36"><defs><linearGradient id="win" x1="0" y1="0" x2="1" y2="1"><stop offset="0" stop-color="#5ccdf8"/><stop offset="1" stop-color="#0a78d4"/></linearGradient></defs><rect x="1" y="1" width="16" height="16" rx="1.5" fill="url(#win)"/><rect x="19" y="1" width="16" height="16" rx="1.5" fill="url(#win)"/><rect x="1" y="19" width="16" height="16" rx="1.5" fill="url(#win)"/><rect x="19" y="19" width="16" height="16" rx="1.5" fill="url(#win)"/></svg>
<svg style="left:1131px;top:1546.5px;" width="36" height="36" viewBox="0 0 36 36"><rect x="13" y="2" width="22" height="22" rx="3" fill="#f1f1f1" stroke="#dcdcdc" stroke-width="1"/><rect x="1" y="12" width="24" height="22" rx="3" fill="#2b2b2b"/><path d="M13 12H25V24H13Z" fill="#9a9a9a"/></svg>
<svg style="left:1197px;top:1546.5px;" width="36" height="36" viewBox="0 0 36 36"><path d="M1 5Q1 3 3 3H12L15 6H33Q35 6 35 8V30Q35 32 33 32H3Q1 32 1 30Z" fill="#e9a825"/><path d="M1 11H35V30Q35 32 33 32H3Q1 32 1 30Z" fill="#fbd054"/><rect x="10" y="23" width="16" height="9" rx="2" fill="#1b74d0"/><rect x="12" y="25" width="12" height="2.5" rx="1" fill="#8cc4f5"/></svg>
<svg style="left:1263px;top:1546.5px;" width="36" height="36" viewBox="0 0 36 36"><defs><linearGradient id="eg" x1="0" y1="0" x2="1" y2="1"><stop offset="0" stop-color="#35c1f1"/><stop offset="0.6" stop-color="#1b6fd6"/><stop offset="1" stop-color="#0b4fa8"/></linearGradient><linearGradient id="eg2" x1="0" y1="0" x2="1" y2="0"><stop offset="0" stop-color="#2cc3e8"/><stop offset="1" stop-color="#6fdc5e"/></linearGradient></defs><circle cx="18" cy="18" r="17" fill="url(#eg)"/><path d="M2 15A16.5 16.5 0 0 1 34.8 15C35 21 30 23 24 23H17C17 18 21 16 24 17C22 11 8 10 2 15Z" fill="url(#eg2)"/><path d="M12 24C12 30 20 35 28 31C20 32 15 28 17 22Z" fill="#0c3f93"/></svg>
<svg style="left:1329px;top:1546.5px;" width="36" height="36" viewBox="0 0 36 36"><circle cx="18" cy="18" r="17" fill="#e33b2e"/><path d="M18 18L3.3 9.5A17 17 0 0 0 10 33Z" fill="#2da24a"/><path d="M18 18L10 33A17 17 0 0 0 32.7 26.5Z" fill="#fbc116" transform="rotate(-2 18 18)"/><path d="M18 18L32.7 9.5A17 17 0 0 1 26 33Z" fill="#fbc116"/><path d="M18 1A17 17 0 0 1 32.7 9.5H18Z" fill="#e33b2e"/><path d="M3.3 9.5A17 17 0 0 1 32.7 9.5H18A8.5 8.5 0 0 0 10.6 13.8Z" fill="#e33b2e"/><circle cx="18" cy="18" r="8" fill="#fff"/><circle cx="18" cy="18" r="6.3" fill="#3a7fe6"/></svg>
<svg style="left:1395px;top:1546.5px;" width="36" height="36" viewBox="0 0 36 36"><rect x="0" y="0" width="36" height="36" rx="7" fill="#fff"/><ellipse cx="18" cy="19" rx="9" ry="12" fill="#111"/><ellipse cx="18" cy="24" rx="6" ry="7" fill="#fff"/><ellipse cx="14.8" cy="12.5" rx="1.8" ry="2.6" fill="#fff"/><ellipse cx="21.2" cy="12.5" rx="1.8" ry="2.6" fill="#fff"/><ellipse cx="18" cy="16.8" rx="3.6" ry="1.5" fill="#f5a21b"/><path d="M9 19Q18 24 27 19L27 22Q18 27 9 22Z" fill="#e2231a"/><path d="M6 20L10 17V27L7 29Z" fill="#111"/><path d="M30 20L26 17V27L29 29Z" fill="#111"/><ellipse cx="13" cy="32" rx="4.5" ry="2" fill="#f5a21b"/><ellipse cx="23" cy="32" rx="4.5" ry="2" fill="#f5a21b"/></svg>
<div style="left:1451.5px;top:1535px;width:56px;height:58px;background:rgba(255,255,255,.42);border:1px solid rgba(255,255,255,.6);border-radius:6px;"></div>
<svg style="left:1461px;top:1546.5px;" width="36" height="36" viewBox="0 0 36 36"><rect x="0" y="0" width="36" height="36" fill="#fff"/><path d="M20 3C34 6 38 23 22 32C30 23 30 9 20 3Z" fill="#1f477f"/><path d="M3 29C11 34 25 33 33 24" stroke="#1f477f" stroke-width="1.3" fill="none"/><text x="14" y="25" font-size="19" font-weight="bold" font-style="italic" fill="#17396b" text-anchor="middle" font-family="Liberation Sans, sans-serif" letter-spacing="-1.5">AP</text></svg>
<div style="left:1211px;top:1588.5px;width:8.5px;height:3.5px;background:#7f8a86;border-radius:2px;"></div>
<div style="left:1409px;top:1588.5px;width:8.5px;height:3.5px;background:#7f8a86;border-radius:2px;"></div>
<div style="left:1467px;top:1588.5px;width:24px;height:4px;background:#1c6ed8;border-radius:2px;"></div>
<svg style="left:1967.5px;top:1556.7px;" width="18" height="12" viewBox="0 0 18 12"><path d="M1.5 10.5L9 2.5L16.5 10.5" stroke="#111" stroke-width="1.8" fill="none"/></svg>
<svg style="left:2012px;top:1550.7px;" width="26" height="27" viewBox="0 0 26 27"><ellipse cx="11" cy="13" rx="7" ry="10" fill="#111"/><ellipse cx="11" cy="17" rx="4.6" ry="5.5" fill="#fff"/><ellipse cx="8.8" cy="7.5" rx="1.3" ry="1.9" fill="#fff"/><ellipse cx="13.2" cy="7.5" rx="1.3" ry="1.9" fill="#fff"/><ellipse cx="11" cy="10.8" rx="2.7" ry="1.1" fill="#f5a21b"/><path d="M4.5 12.5Q11 16.5 17.5 12.5V15Q11 19 4.5 15Z" fill="#e2231a"/><ellipse cx="7.5" cy="24" rx="3.3" ry="1.6" fill="#f5a21b"/><circle cx="19.5" cy="20.5" r="5.3" fill="#29c765"/></svg>
<svg style="left:2059.5px;top:1555.7px;" width="27" height="18" viewBox="0 0 27 18"><path d="M7 17A5.5 5.5 0 0 1 6.5 6.2A7.5 7.5 0 0 1 20 5.5A6 6 0 0 1 21 17Z" fill="#d9d9d9" stroke="#222" stroke-width="1.6"/><path d="M4 13Q12 7 24 12" stroke="#8a8a8a" stroke-width="1.2" fill="none"/></svg>
<svg style="left:2109.5px;top:1551.7px;" width="24" height="26" viewBox="0 0 24 26"><path d="M11 1Q6 4 1 4.5Q0.5 17 11 24Q21.5 17 21 4.5Q16 4 11 1Z" fill="#2580e0"/><path d="M11 1Q16 4 21 4.5Q21.5 17 11 24Z" fill="#1460bd"/><path d="M17 13L23.5 25H10.5Z" fill="#f7c21a"/><path d="M17 17V21M17 22.3V23.6" stroke="#111" stroke-width="1.4"/></svg>
<svg style="left:2159.5px;top:1551.2px;" width="19" height="25" viewBox="0 0 19 25"><ellipse cx="9.5" cy="12.5" rx="9.5" ry="12.5" fill="#1a7ff0"/><path d="M5 8L14 16.5L9.5 21V4L14 8.5L5 17" stroke="#fff" stroke-width="1.6" fill="none"/></svg>
<div style="top:1549.7px;line-height:30px;height:30px;font-size:23px;color:#7a7a7a;white-space:pre;font-weight:bold;left:2218px;left:2206.5px;">中</div>
<svg style="left:2262px;top:1551.7px;" width="24" height="24" viewBox="0 0 24 24"><path d="M2 5.5Q2 3.5 4 3L17.5 0.8Q20 0.5 20.5 3L23 18.5Q23.3 21 21 21.5L7.5 23.5Q5 23.8 4.5 21.5Z" fill="#f26a2b"/><text x="12.5" y="19.6" font-size="21" font-weight="bold" font-style="italic" fill="#fff" text-anchor="middle" font-family="Liberation Sans, sans-serif" transform="rotate(-10 12.5 12) translate(12.5 0) scale(1.18 0.92) translate(-12.5 1.2)">S</text></svg>
<svg style="left:2319px;top:1554.2px;" width="25" height="20" viewBox="0 0 25 20"><path d="M1.5 7A15.5 15.5 0 0 1 23.5 7" stroke="#111" stroke-width="1.7" fill="none"/><path d="M5 11A10.5 10.5 0 0 1 20 11" stroke="#111" stroke-width="1.7" fill="none"/><path d="M8.5 14.6A5.8 5.8 0 0 1 16.5 14.6" stroke="#111" stroke-width="1.7" fill="none"/><circle cx="12.5" cy="18" r="1.7" fill="#111"/></svg>
<svg style="left:2353.5px;top:1554.7px;" width="26" height="19" viewBox="0 0 26 19"><path d="M1.5 6.5H5L10 2V17L5 12.5H1.5Z" fill="none" stroke="#111" stroke-width="1.5" stroke-linejoin="round"/><path d="M13 6.5A4 4 0 0 1 13 12.5" stroke="#111" stroke-width="1.5" fill="none"/><path d="M15.5 4A7.5 7.5 0 0 1 15.5 15" stroke="#111" stroke-width="1.5" fill="none"/><path d="M18.5 1.5A11 11 0 0 1 18.5 17.5" stroke="#b5b5b5" stroke-width="1.4" fill="none"/></svg>
<svg style="left:2389.5px;top:1552.7px;" width="27" height="21" viewBox="0 0 27 21"><rect x="2.5" y="6.5" width="19.5" height="12" rx="2.5" fill="none" stroke="#111" stroke-width="1.6"/><rect x="4.8" y="8.8" width="13" height="7.4" rx="1" fill="#111"/><path d="M22.5 10.5H24.3V14.5H22.5" stroke="#111" stroke-width="1.5" fill="none"/><path d="M5 1L3 7H8L2.5 12" stroke="#111" stroke-width="1.6" fill="none"/></svg>
<div style="top:1541.3px;line-height:23px;height:23px;font-size:18px;color:#111;white-space:pre;letter-spacing:-0.21px;left:2487px;">12:05</div>
<div style="top:1565.3px;line-height:23px;height:23px;font-size:18px;color:#111;white-space:pre;letter-spacing:-0.01px;left:2441px;">2025/10/10</div>
</body></html>
